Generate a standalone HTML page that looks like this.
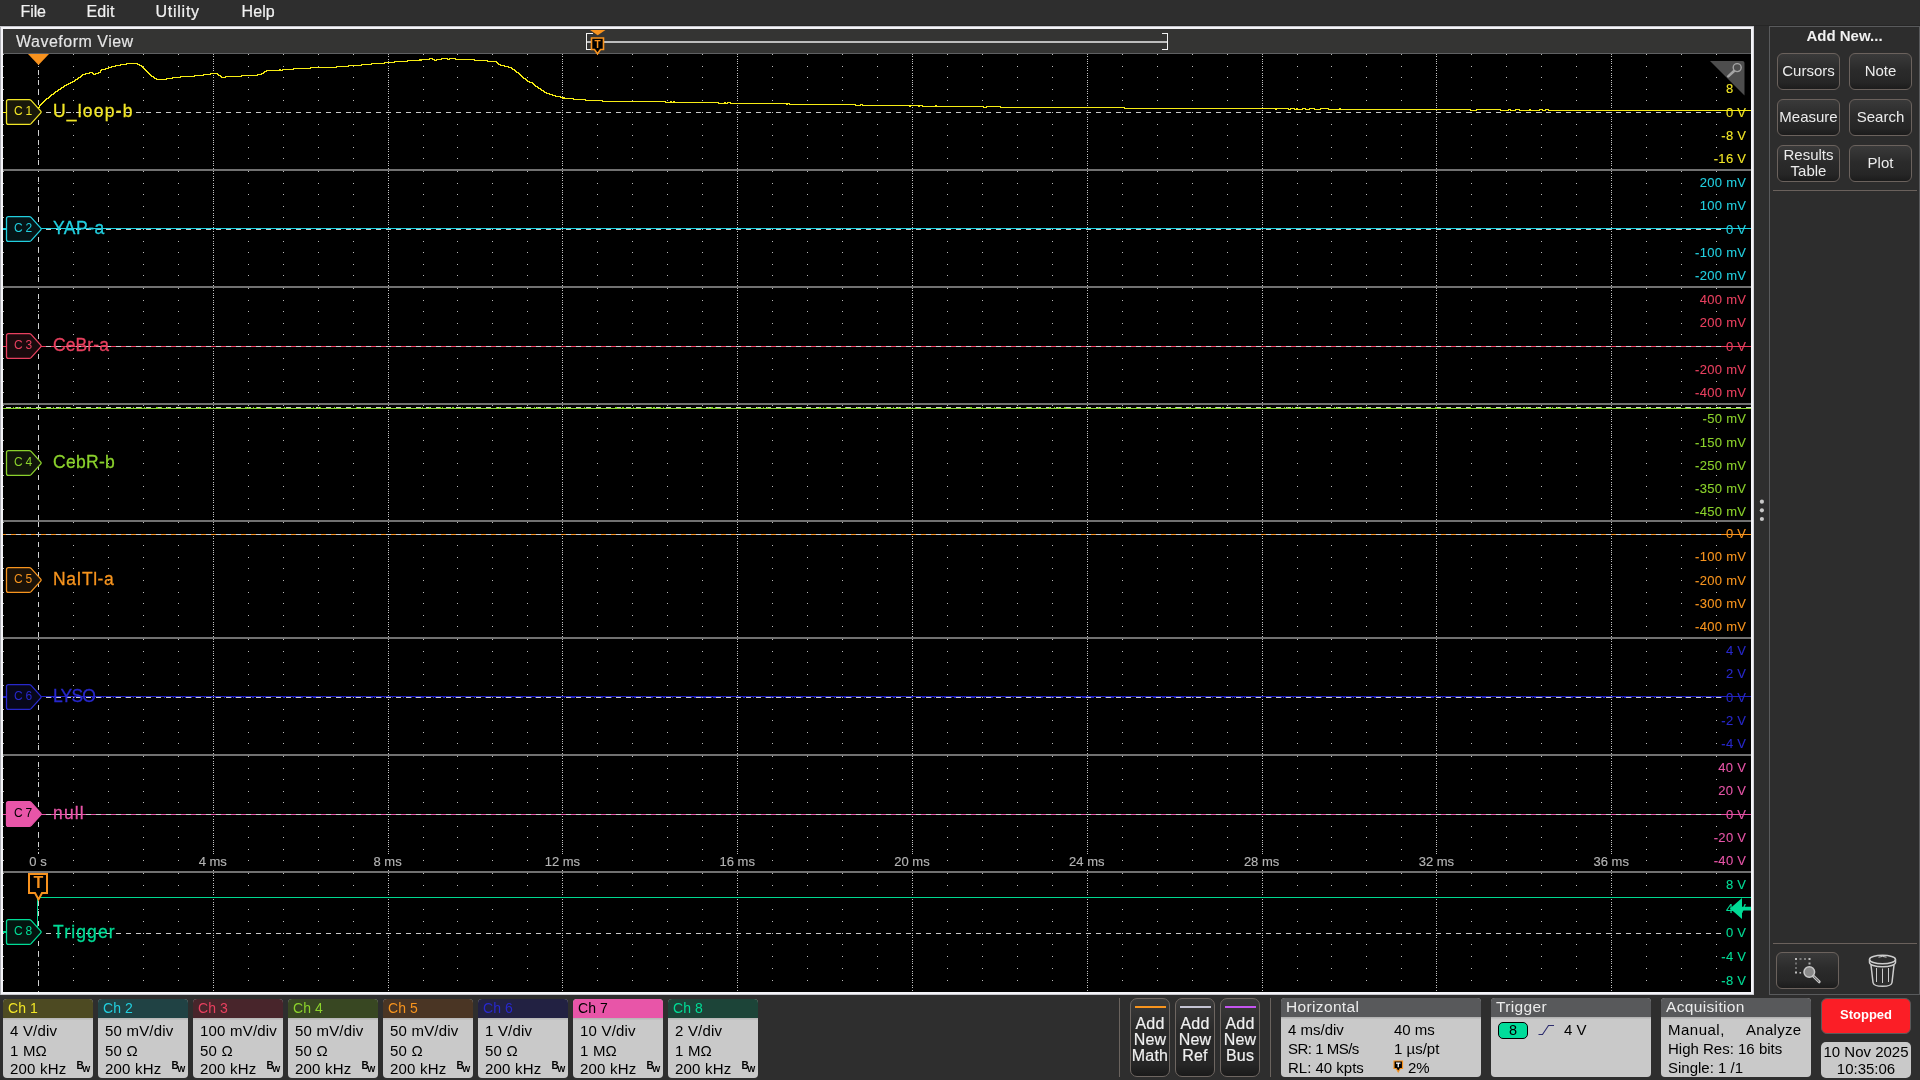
<!DOCTYPE html>
<html lang="en"><head><meta charset="utf-8"><title>Oscilloscope</title>
<style>
html,body{margin:0;padding:0;}
body{width:1920px;height:1080px;overflow:hidden;will-change:transform;background:#2e2e2e;font-family:"Liberation Sans",sans-serif;color:#eee;position:relative;}
.abs{position:absolute;}
.menu span{-webkit-text-stroke:0.2px currentColor;position:absolute;top:2px;font-size:16px;line-height:20px;color:#f2f2f2;white-space:nowrap;}
#frame{position:absolute;left:0;top:26px;width:1754px;height:969px;background:#f4f4f8;}
#frame .l0{position:absolute;left:0;top:1px;width:1px;height:968px;background:#b2b3b8;}
#hdr{position:absolute;left:3px;top:29px;width:1748px;height:24px;background:#343433;border-bottom:1px solid #5f6062;}
#hdr .t{-webkit-text-stroke:0.15px currentColor;position:absolute;left:13px;top:3px;font-size:16px;line-height:20px;color:#e6e6e6;letter-spacing:0.5px;}
#plot{position:absolute;left:3px;top:54px;width:1748px;height:938px;background:#000;}
svg{position:absolute;left:0;top:0;}
.nm{position:absolute;font-size:17.5px;line-height:20px;white-space:nowrap;-webkit-text-stroke:0.28px currentColor;}
.sc{-webkit-text-stroke:0.1px currentColor;position:absolute;left:1656.3px;font-size:13px;line-height:14px;white-space:nowrap;text-align:right;width:90px;letter-spacing:0.3px;}
.sc span{background:#000;padding-left:4px;}
.tl{-webkit-text-stroke:0.15px currentColor;position:absolute;font-size:13px;line-height:14px;white-space:nowrap;text-align:center;width:60px;color:#b4b4b4;top:854px;}
.tl span{background:#000;display:inline-block;padding:1px 1px 1px 1px;}
.bdg{position:absolute;font-size:12px;line-height:14px;width:26px;text-align:center;word-spacing:-0.5px;}
#rp{position:absolute;left:1769px;top:26px;width:149px;height:967px;border:1px solid #595a5c;background:#2d2d2d;}
.btn{position:absolute;width:61px;height:35px;border:1px solid #6b625d;border-radius:6px;background:linear-gradient(#3a3a3a 0%,#2b2b2b 45%,#262626 80%,#1c1c1c 100%);color:#ececec;font-size:15px;text-align:center;}
.btn span{display:block;}
.cb{position:absolute;top:999px;width:90px;height:79px;border-radius:4px;background:#c9c9c9;overflow:hidden;color:#000;}
.cb .h{position:absolute;left:0;top:0;width:100%;height:19px;}
.cb .h span{position:absolute;left:5px;top:1px;font-size:14px;line-height:17px;letter-spacing:0.1px;}
.cb .sh{position:absolute;left:0;top:19px;width:100%;height:2px;background:linear-gradient(#b4b4b4,#c4c4c4);}
.cb .r{position:absolute;left:7px;font-size:15px;line-height:17px;white-space:nowrap;letter-spacing:0.2px;}
.cb .bw{position:absolute;left:73.5px;top:61.5px;font-size:10px;line-height:10px;font-weight:bold;}
.cb .bw sub{font-size:8.5px;vertical-align:-3px;margin-left:-1.5px;font-weight:bold;}
.pn{position:absolute;top:998px;height:79px;border-radius:4px;background:#c9c9c9;overflow:hidden;color:#000;}
.pn .h{position:absolute;left:0;top:0;width:100%;height:19px;background:#58595b;}
.pn .h span{position:absolute;left:5px;top:-0.5px;font-size:15.5px;line-height:17px;color:#ececec;letter-spacing:0.35px;}
.pn .sh{position:absolute;left:0;top:19px;width:100%;height:2px;background:linear-gradient(#aeaeae,#c4c4c4);}
.pn .r{position:absolute;font-size:15px;line-height:17px;white-space:nowrap;}
.an{-webkit-text-stroke:0.2px currentColor;position:absolute;top:998px;width:38px;height:77px;border:1px solid #6e6661;border-radius:7px;background:linear-gradient(#3b3b3b 0%,#2a2a2a 40%,#262626 85%,#1a1a1a 100%);color:#f0f0f0;font-size:16px;line-height:16px;text-align:center;letter-spacing:0.2px;}
.an i{position:absolute;left:4px;top:7px;width:31px;height:2px;}
.an div{position:absolute;left:-4px;width:46px;top:17px;}
</style></head><body>

<div class="menu">
<span style="left:20.5px;letter-spacing:-0.1px">File</span>
<span style="left:86.5px;letter-spacing:0.1px">Edit</span>
<span style="left:155.5px;letter-spacing:0.75px">Utility</span>
<span style="left:241.5px;letter-spacing:0.1px">Help</span>
</div>
<div class="abs" style="left:0;top:25px;width:1920px;height:1px;background:#262626"></div>
<div id="frame"><div class="l0"></div><div class="abs" style="left:0;top:0;width:1754px;height:1px;background:#c4c4ca"></div><div class="abs" style="left:1753px;top:1px;width:1px;height:968px;background:#d6d6dc"></div><div class="abs" style="left:1px;top:968px;width:1753px;height:1px;background:#c8c8ce"></div></div>
<div id="hdr"><div class="t">Waveform View</div></div>
<div id="plot"></div>
<svg width="1920" height="1080" viewBox="0 0 1920 1080">
<defs><clipPath id="cp"><rect x="3" y="54" width="1748" height="938"/></clipPath></defs>
<g clip-path="url(#cp)" shape-rendering="crispEdges">
<path d="M3 54h1M38 54h1M73 54h1M108 54h1M143 54h1M178 54h1M213 54h1M248 54h1M283 54h1M318 54h1M353 54h1M388 54h1M423 54h1M457 54h1M492 54h1M527 54h1M562 54h1M597 54h1M632 54h1M667 54h1M702 54h1M737 54h1M772 54h1M807 54h1M842 54h1M877 54h1M912 54h1M947 54h1M982 54h1M1017 54h1M1052 54h1M1087 54h1M1122 54h1M1157 54h1M1192 54h1M1227 54h1M1262 54h1M1297 54h1M1331 54h1M1366 54h1M1401 54h1M1436 54h1M1471 54h1M1506 54h1M1541 54h1M1576 54h1M1611 54h1M1646 54h1M1681 54h1M1716 54h1M1751 54h1M3 66h1M38 66h1M73 66h1M108 66h1M143 66h1M178 66h1M213 66h1M248 66h1M283 66h1M318 66h1M353 66h1M388 66h1M423 66h1M457 66h1M492 66h1M527 66h1M562 66h1M597 66h1M632 66h1M667 66h1M702 66h1M737 66h1M772 66h1M807 66h1M842 66h1M877 66h1M912 66h1M947 66h1M982 66h1M1017 66h1M1052 66h1M1087 66h1M1122 66h1M1157 66h1M1192 66h1M1227 66h1M1262 66h1M1297 66h1M1331 66h1M1366 66h1M1401 66h1M1436 66h1M1471 66h1M1506 66h1M1541 66h1M1576 66h1M1611 66h1M1646 66h1M1681 66h1M1716 66h1M1751 66h1M3 77h1M38 77h1M73 77h1M108 77h1M143 77h1M178 77h1M213 77h1M248 77h1M283 77h1M318 77h1M353 77h1M388 77h1M423 77h1M457 77h1M492 77h1M527 77h1M562 77h1M597 77h1M632 77h1M667 77h1M702 77h1M737 77h1M772 77h1M807 77h1M842 77h1M877 77h1M912 77h1M947 77h1M982 77h1M1017 77h1M1052 77h1M1087 77h1M1122 77h1M1157 77h1M1192 77h1M1227 77h1M1262 77h1M1297 77h1M1331 77h1M1366 77h1M1401 77h1M1436 77h1M1471 77h1M1506 77h1M1541 77h1M1576 77h1M1611 77h1M1646 77h1M1681 77h1M1716 77h1M1751 77h1M3 89h1M38 89h1M73 89h1M108 89h1M143 89h1M178 89h1M213 89h1M248 89h1M283 89h1M318 89h1M353 89h1M388 89h1M423 89h1M457 89h1M492 89h1M527 89h1M562 89h1M597 89h1M632 89h1M667 89h1M702 89h1M737 89h1M772 89h1M807 89h1M842 89h1M877 89h1M912 89h1M947 89h1M982 89h1M1017 89h1M1052 89h1M1087 89h1M1122 89h1M1157 89h1M1192 89h1M1227 89h1M1262 89h1M1297 89h1M1331 89h1M1366 89h1M1401 89h1M1436 89h1M1471 89h1M1506 89h1M1541 89h1M1576 89h1M1611 89h1M1646 89h1M1681 89h1M1716 89h1M1751 89h1M3 100h1M38 100h1M73 100h1M108 100h1M143 100h1M178 100h1M213 100h1M248 100h1M283 100h1M318 100h1M353 100h1M388 100h1M423 100h1M457 100h1M492 100h1M527 100h1M562 100h1M597 100h1M632 100h1M667 100h1M702 100h1M737 100h1M772 100h1M807 100h1M842 100h1M877 100h1M912 100h1M947 100h1M982 100h1M1017 100h1M1052 100h1M1087 100h1M1122 100h1M1157 100h1M1192 100h1M1227 100h1M1262 100h1M1297 100h1M1331 100h1M1366 100h1M1401 100h1M1436 100h1M1471 100h1M1506 100h1M1541 100h1M1576 100h1M1611 100h1M1646 100h1M1681 100h1M1716 100h1M1751 100h1M3 112h1M38 112h1M73 112h1M108 112h1M143 112h1M178 112h1M213 112h1M248 112h1M283 112h1M318 112h1M353 112h1M388 112h1M423 112h1M457 112h1M492 112h1M527 112h1M562 112h1M597 112h1M632 112h1M667 112h1M702 112h1M737 112h1M772 112h1M807 112h1M842 112h1M877 112h1M912 112h1M947 112h1M982 112h1M1017 112h1M1052 112h1M1087 112h1M1122 112h1M1157 112h1M1192 112h1M1227 112h1M1262 112h1M1297 112h1M1331 112h1M1366 112h1M1401 112h1M1436 112h1M1471 112h1M1506 112h1M1541 112h1M1576 112h1M1611 112h1M1646 112h1M1681 112h1M1716 112h1M1751 112h1M3 124h1M38 124h1M73 124h1M108 124h1M143 124h1M178 124h1M213 124h1M248 124h1M283 124h1M318 124h1M353 124h1M388 124h1M423 124h1M457 124h1M492 124h1M527 124h1M562 124h1M597 124h1M632 124h1M667 124h1M702 124h1M737 124h1M772 124h1M807 124h1M842 124h1M877 124h1M912 124h1M947 124h1M982 124h1M1017 124h1M1052 124h1M1087 124h1M1122 124h1M1157 124h1M1192 124h1M1227 124h1M1262 124h1M1297 124h1M1331 124h1M1366 124h1M1401 124h1M1436 124h1M1471 124h1M1506 124h1M1541 124h1M1576 124h1M1611 124h1M1646 124h1M1681 124h1M1716 124h1M1751 124h1M3 135h1M38 135h1M73 135h1M108 135h1M143 135h1M178 135h1M213 135h1M248 135h1M283 135h1M318 135h1M353 135h1M388 135h1M423 135h1M457 135h1M492 135h1M527 135h1M562 135h1M597 135h1M632 135h1M667 135h1M702 135h1M737 135h1M772 135h1M807 135h1M842 135h1M877 135h1M912 135h1M947 135h1M982 135h1M1017 135h1M1052 135h1M1087 135h1M1122 135h1M1157 135h1M1192 135h1M1227 135h1M1262 135h1M1297 135h1M1331 135h1M1366 135h1M1401 135h1M1436 135h1M1471 135h1M1506 135h1M1541 135h1M1576 135h1M1611 135h1M1646 135h1M1681 135h1M1716 135h1M1751 135h1M3 147h1M38 147h1M73 147h1M108 147h1M143 147h1M178 147h1M213 147h1M248 147h1M283 147h1M318 147h1M353 147h1M388 147h1M423 147h1M457 147h1M492 147h1M527 147h1M562 147h1M597 147h1M632 147h1M667 147h1M702 147h1M737 147h1M772 147h1M807 147h1M842 147h1M877 147h1M912 147h1M947 147h1M982 147h1M1017 147h1M1052 147h1M1087 147h1M1122 147h1M1157 147h1M1192 147h1M1227 147h1M1262 147h1M1297 147h1M1331 147h1M1366 147h1M1401 147h1M1436 147h1M1471 147h1M1506 147h1M1541 147h1M1576 147h1M1611 147h1M1646 147h1M1681 147h1M1716 147h1M1751 147h1M3 158h1M38 158h1M73 158h1M108 158h1M143 158h1M178 158h1M213 158h1M248 158h1M283 158h1M318 158h1M353 158h1M388 158h1M423 158h1M457 158h1M492 158h1M527 158h1M562 158h1M597 158h1M632 158h1M667 158h1M702 158h1M737 158h1M772 158h1M807 158h1M842 158h1M877 158h1M912 158h1M947 158h1M982 158h1M1017 158h1M1052 158h1M1087 158h1M1122 158h1M1157 158h1M1192 158h1M1227 158h1M1262 158h1M1297 158h1M1331 158h1M1366 158h1M1401 158h1M1436 158h1M1471 158h1M1506 158h1M1541 158h1M1576 158h1M1611 158h1M1646 158h1M1681 158h1M1716 158h1M1751 158h1M3 171h1M38 171h1M73 171h1M108 171h1M143 171h1M178 171h1M213 171h1M248 171h1M283 171h1M318 171h1M353 171h1M388 171h1M423 171h1M457 171h1M492 171h1M527 171h1M562 171h1M597 171h1M632 171h1M667 171h1M702 171h1M737 171h1M772 171h1M807 171h1M842 171h1M877 171h1M912 171h1M947 171h1M982 171h1M1017 171h1M1052 171h1M1087 171h1M1122 171h1M1157 171h1M1192 171h1M1227 171h1M1262 171h1M1297 171h1M1331 171h1M1366 171h1M1401 171h1M1436 171h1M1471 171h1M1506 171h1M1541 171h1M1576 171h1M1611 171h1M1646 171h1M1681 171h1M1716 171h1M1751 171h1M3 183h1M38 183h1M73 183h1M108 183h1M143 183h1M178 183h1M213 183h1M248 183h1M283 183h1M318 183h1M353 183h1M388 183h1M423 183h1M457 183h1M492 183h1M527 183h1M562 183h1M597 183h1M632 183h1M667 183h1M702 183h1M737 183h1M772 183h1M807 183h1M842 183h1M877 183h1M912 183h1M947 183h1M982 183h1M1017 183h1M1052 183h1M1087 183h1M1122 183h1M1157 183h1M1192 183h1M1227 183h1M1262 183h1M1297 183h1M1331 183h1M1366 183h1M1401 183h1M1436 183h1M1471 183h1M1506 183h1M1541 183h1M1576 183h1M1611 183h1M1646 183h1M1681 183h1M1716 183h1M1751 183h1M3 194h1M38 194h1M73 194h1M108 194h1M143 194h1M178 194h1M213 194h1M248 194h1M283 194h1M318 194h1M353 194h1M388 194h1M423 194h1M457 194h1M492 194h1M527 194h1M562 194h1M597 194h1M632 194h1M667 194h1M702 194h1M737 194h1M772 194h1M807 194h1M842 194h1M877 194h1M912 194h1M947 194h1M982 194h1M1017 194h1M1052 194h1M1087 194h1M1122 194h1M1157 194h1M1192 194h1M1227 194h1M1262 194h1M1297 194h1M1331 194h1M1366 194h1M1401 194h1M1436 194h1M1471 194h1M1506 194h1M1541 194h1M1576 194h1M1611 194h1M1646 194h1M1681 194h1M1716 194h1M1751 194h1M3 206h1M38 206h1M73 206h1M108 206h1M143 206h1M178 206h1M213 206h1M248 206h1M283 206h1M318 206h1M353 206h1M388 206h1M423 206h1M457 206h1M492 206h1M527 206h1M562 206h1M597 206h1M632 206h1M667 206h1M702 206h1M737 206h1M772 206h1M807 206h1M842 206h1M877 206h1M912 206h1M947 206h1M982 206h1M1017 206h1M1052 206h1M1087 206h1M1122 206h1M1157 206h1M1192 206h1M1227 206h1M1262 206h1M1297 206h1M1331 206h1M1366 206h1M1401 206h1M1436 206h1M1471 206h1M1506 206h1M1541 206h1M1576 206h1M1611 206h1M1646 206h1M1681 206h1M1716 206h1M1751 206h1M3 217h1M38 217h1M73 217h1M108 217h1M143 217h1M178 217h1M213 217h1M248 217h1M283 217h1M318 217h1M353 217h1M388 217h1M423 217h1M457 217h1M492 217h1M527 217h1M562 217h1M597 217h1M632 217h1M667 217h1M702 217h1M737 217h1M772 217h1M807 217h1M842 217h1M877 217h1M912 217h1M947 217h1M982 217h1M1017 217h1M1052 217h1M1087 217h1M1122 217h1M1157 217h1M1192 217h1M1227 217h1M1262 217h1M1297 217h1M1331 217h1M1366 217h1M1401 217h1M1436 217h1M1471 217h1M1506 217h1M1541 217h1M1576 217h1M1611 217h1M1646 217h1M1681 217h1M1716 217h1M1751 217h1M3 229h1M38 229h1M73 229h1M108 229h1M143 229h1M178 229h1M213 229h1M248 229h1M283 229h1M318 229h1M353 229h1M388 229h1M423 229h1M457 229h1M492 229h1M527 229h1M562 229h1M597 229h1M632 229h1M667 229h1M702 229h1M737 229h1M772 229h1M807 229h1M842 229h1M877 229h1M912 229h1M947 229h1M982 229h1M1017 229h1M1052 229h1M1087 229h1M1122 229h1M1157 229h1M1192 229h1M1227 229h1M1262 229h1M1297 229h1M1331 229h1M1366 229h1M1401 229h1M1436 229h1M1471 229h1M1506 229h1M1541 229h1M1576 229h1M1611 229h1M1646 229h1M1681 229h1M1716 229h1M1751 229h1M3 241h1M38 241h1M73 241h1M108 241h1M143 241h1M178 241h1M213 241h1M248 241h1M283 241h1M318 241h1M353 241h1M388 241h1M423 241h1M457 241h1M492 241h1M527 241h1M562 241h1M597 241h1M632 241h1M667 241h1M702 241h1M737 241h1M772 241h1M807 241h1M842 241h1M877 241h1M912 241h1M947 241h1M982 241h1M1017 241h1M1052 241h1M1087 241h1M1122 241h1M1157 241h1M1192 241h1M1227 241h1M1262 241h1M1297 241h1M1331 241h1M1366 241h1M1401 241h1M1436 241h1M1471 241h1M1506 241h1M1541 241h1M1576 241h1M1611 241h1M1646 241h1M1681 241h1M1716 241h1M1751 241h1M3 252h1M38 252h1M73 252h1M108 252h1M143 252h1M178 252h1M213 252h1M248 252h1M283 252h1M318 252h1M353 252h1M388 252h1M423 252h1M457 252h1M492 252h1M527 252h1M562 252h1M597 252h1M632 252h1M667 252h1M702 252h1M737 252h1M772 252h1M807 252h1M842 252h1M877 252h1M912 252h1M947 252h1M982 252h1M1017 252h1M1052 252h1M1087 252h1M1122 252h1M1157 252h1M1192 252h1M1227 252h1M1262 252h1M1297 252h1M1331 252h1M1366 252h1M1401 252h1M1436 252h1M1471 252h1M1506 252h1M1541 252h1M1576 252h1M1611 252h1M1646 252h1M1681 252h1M1716 252h1M1751 252h1M3 264h1M38 264h1M73 264h1M108 264h1M143 264h1M178 264h1M213 264h1M248 264h1M283 264h1M318 264h1M353 264h1M388 264h1M423 264h1M457 264h1M492 264h1M527 264h1M562 264h1M597 264h1M632 264h1M667 264h1M702 264h1M737 264h1M772 264h1M807 264h1M842 264h1M877 264h1M912 264h1M947 264h1M982 264h1M1017 264h1M1052 264h1M1087 264h1M1122 264h1M1157 264h1M1192 264h1M1227 264h1M1262 264h1M1297 264h1M1331 264h1M1366 264h1M1401 264h1M1436 264h1M1471 264h1M1506 264h1M1541 264h1M1576 264h1M1611 264h1M1646 264h1M1681 264h1M1716 264h1M1751 264h1M3 275h1M38 275h1M73 275h1M108 275h1M143 275h1M178 275h1M213 275h1M248 275h1M283 275h1M318 275h1M353 275h1M388 275h1M423 275h1M457 275h1M492 275h1M527 275h1M562 275h1M597 275h1M632 275h1M667 275h1M702 275h1M737 275h1M772 275h1M807 275h1M842 275h1M877 275h1M912 275h1M947 275h1M982 275h1M1017 275h1M1052 275h1M1087 275h1M1122 275h1M1157 275h1M1192 275h1M1227 275h1M1262 275h1M1297 275h1M1331 275h1M1366 275h1M1401 275h1M1436 275h1M1471 275h1M1506 275h1M1541 275h1M1576 275h1M1611 275h1M1646 275h1M1681 275h1M1716 275h1M1751 275h1M3 288h1M38 288h1M73 288h1M108 288h1M143 288h1M178 288h1M213 288h1M248 288h1M283 288h1M318 288h1M353 288h1M388 288h1M423 288h1M457 288h1M492 288h1M527 288h1M562 288h1M597 288h1M632 288h1M667 288h1M702 288h1M737 288h1M772 288h1M807 288h1M842 288h1M877 288h1M912 288h1M947 288h1M982 288h1M1017 288h1M1052 288h1M1087 288h1M1122 288h1M1157 288h1M1192 288h1M1227 288h1M1262 288h1M1297 288h1M1331 288h1M1366 288h1M1401 288h1M1436 288h1M1471 288h1M1506 288h1M1541 288h1M1576 288h1M1611 288h1M1646 288h1M1681 288h1M1716 288h1M1751 288h1M3 300h1M38 300h1M73 300h1M108 300h1M143 300h1M178 300h1M213 300h1M248 300h1M283 300h1M318 300h1M353 300h1M388 300h1M423 300h1M457 300h1M492 300h1M527 300h1M562 300h1M597 300h1M632 300h1M667 300h1M702 300h1M737 300h1M772 300h1M807 300h1M842 300h1M877 300h1M912 300h1M947 300h1M982 300h1M1017 300h1M1052 300h1M1087 300h1M1122 300h1M1157 300h1M1192 300h1M1227 300h1M1262 300h1M1297 300h1M1331 300h1M1366 300h1M1401 300h1M1436 300h1M1471 300h1M1506 300h1M1541 300h1M1576 300h1M1611 300h1M1646 300h1M1681 300h1M1716 300h1M1751 300h1M3 311h1M38 311h1M73 311h1M108 311h1M143 311h1M178 311h1M213 311h1M248 311h1M283 311h1M318 311h1M353 311h1M388 311h1M423 311h1M457 311h1M492 311h1M527 311h1M562 311h1M597 311h1M632 311h1M667 311h1M702 311h1M737 311h1M772 311h1M807 311h1M842 311h1M877 311h1M912 311h1M947 311h1M982 311h1M1017 311h1M1052 311h1M1087 311h1M1122 311h1M1157 311h1M1192 311h1M1227 311h1M1262 311h1M1297 311h1M1331 311h1M1366 311h1M1401 311h1M1436 311h1M1471 311h1M1506 311h1M1541 311h1M1576 311h1M1611 311h1M1646 311h1M1681 311h1M1716 311h1M1751 311h1M3 323h1M38 323h1M73 323h1M108 323h1M143 323h1M178 323h1M213 323h1M248 323h1M283 323h1M318 323h1M353 323h1M388 323h1M423 323h1M457 323h1M492 323h1M527 323h1M562 323h1M597 323h1M632 323h1M667 323h1M702 323h1M737 323h1M772 323h1M807 323h1M842 323h1M877 323h1M912 323h1M947 323h1M982 323h1M1017 323h1M1052 323h1M1087 323h1M1122 323h1M1157 323h1M1192 323h1M1227 323h1M1262 323h1M1297 323h1M1331 323h1M1366 323h1M1401 323h1M1436 323h1M1471 323h1M1506 323h1M1541 323h1M1576 323h1M1611 323h1M1646 323h1M1681 323h1M1716 323h1M1751 323h1M3 334h1M38 334h1M73 334h1M108 334h1M143 334h1M178 334h1M213 334h1M248 334h1M283 334h1M318 334h1M353 334h1M388 334h1M423 334h1M457 334h1M492 334h1M527 334h1M562 334h1M597 334h1M632 334h1M667 334h1M702 334h1M737 334h1M772 334h1M807 334h1M842 334h1M877 334h1M912 334h1M947 334h1M982 334h1M1017 334h1M1052 334h1M1087 334h1M1122 334h1M1157 334h1M1192 334h1M1227 334h1M1262 334h1M1297 334h1M1331 334h1M1366 334h1M1401 334h1M1436 334h1M1471 334h1M1506 334h1M1541 334h1M1576 334h1M1611 334h1M1646 334h1M1681 334h1M1716 334h1M1751 334h1M3 346h1M38 346h1M73 346h1M108 346h1M143 346h1M178 346h1M213 346h1M248 346h1M283 346h1M318 346h1M353 346h1M388 346h1M423 346h1M457 346h1M492 346h1M527 346h1M562 346h1M597 346h1M632 346h1M667 346h1M702 346h1M737 346h1M772 346h1M807 346h1M842 346h1M877 346h1M912 346h1M947 346h1M982 346h1M1017 346h1M1052 346h1M1087 346h1M1122 346h1M1157 346h1M1192 346h1M1227 346h1M1262 346h1M1297 346h1M1331 346h1M1366 346h1M1401 346h1M1436 346h1M1471 346h1M1506 346h1M1541 346h1M1576 346h1M1611 346h1M1646 346h1M1681 346h1M1716 346h1M1751 346h1M3 358h1M38 358h1M73 358h1M108 358h1M143 358h1M178 358h1M213 358h1M248 358h1M283 358h1M318 358h1M353 358h1M388 358h1M423 358h1M457 358h1M492 358h1M527 358h1M562 358h1M597 358h1M632 358h1M667 358h1M702 358h1M737 358h1M772 358h1M807 358h1M842 358h1M877 358h1M912 358h1M947 358h1M982 358h1M1017 358h1M1052 358h1M1087 358h1M1122 358h1M1157 358h1M1192 358h1M1227 358h1M1262 358h1M1297 358h1M1331 358h1M1366 358h1M1401 358h1M1436 358h1M1471 358h1M1506 358h1M1541 358h1M1576 358h1M1611 358h1M1646 358h1M1681 358h1M1716 358h1M1751 358h1M3 369h1M38 369h1M73 369h1M108 369h1M143 369h1M178 369h1M213 369h1M248 369h1M283 369h1M318 369h1M353 369h1M388 369h1M423 369h1M457 369h1M492 369h1M527 369h1M562 369h1M597 369h1M632 369h1M667 369h1M702 369h1M737 369h1M772 369h1M807 369h1M842 369h1M877 369h1M912 369h1M947 369h1M982 369h1M1017 369h1M1052 369h1M1087 369h1M1122 369h1M1157 369h1M1192 369h1M1227 369h1M1262 369h1M1297 369h1M1331 369h1M1366 369h1M1401 369h1M1436 369h1M1471 369h1M1506 369h1M1541 369h1M1576 369h1M1611 369h1M1646 369h1M1681 369h1M1716 369h1M1751 369h1M3 381h1M38 381h1M73 381h1M108 381h1M143 381h1M178 381h1M213 381h1M248 381h1M283 381h1M318 381h1M353 381h1M388 381h1M423 381h1M457 381h1M492 381h1M527 381h1M562 381h1M597 381h1M632 381h1M667 381h1M702 381h1M737 381h1M772 381h1M807 381h1M842 381h1M877 381h1M912 381h1M947 381h1M982 381h1M1017 381h1M1052 381h1M1087 381h1M1122 381h1M1157 381h1M1192 381h1M1227 381h1M1262 381h1M1297 381h1M1331 381h1M1366 381h1M1401 381h1M1436 381h1M1471 381h1M1506 381h1M1541 381h1M1576 381h1M1611 381h1M1646 381h1M1681 381h1M1716 381h1M1751 381h1M3 392h1M38 392h1M73 392h1M108 392h1M143 392h1M178 392h1M213 392h1M248 392h1M283 392h1M318 392h1M353 392h1M388 392h1M423 392h1M457 392h1M492 392h1M527 392h1M562 392h1M597 392h1M632 392h1M667 392h1M702 392h1M737 392h1M772 392h1M807 392h1M842 392h1M877 392h1M912 392h1M947 392h1M982 392h1M1017 392h1M1052 392h1M1087 392h1M1122 392h1M1157 392h1M1192 392h1M1227 392h1M1262 392h1M1297 392h1M1331 392h1M1366 392h1M1401 392h1M1436 392h1M1471 392h1M1506 392h1M1541 392h1M1576 392h1M1611 392h1M1646 392h1M1681 392h1M1716 392h1M1751 392h1M3 405h1M38 405h1M73 405h1M108 405h1M143 405h1M178 405h1M213 405h1M248 405h1M283 405h1M318 405h1M353 405h1M388 405h1M423 405h1M457 405h1M492 405h1M527 405h1M562 405h1M597 405h1M632 405h1M667 405h1M702 405h1M737 405h1M772 405h1M807 405h1M842 405h1M877 405h1M912 405h1M947 405h1M982 405h1M1017 405h1M1052 405h1M1087 405h1M1122 405h1M1157 405h1M1192 405h1M1227 405h1M1262 405h1M1297 405h1M1331 405h1M1366 405h1M1401 405h1M1436 405h1M1471 405h1M1506 405h1M1541 405h1M1576 405h1M1611 405h1M1646 405h1M1681 405h1M1716 405h1M1751 405h1M3 417h1M38 417h1M73 417h1M108 417h1M143 417h1M178 417h1M213 417h1M248 417h1M283 417h1M318 417h1M353 417h1M388 417h1M423 417h1M457 417h1M492 417h1M527 417h1M562 417h1M597 417h1M632 417h1M667 417h1M702 417h1M737 417h1M772 417h1M807 417h1M842 417h1M877 417h1M912 417h1M947 417h1M982 417h1M1017 417h1M1052 417h1M1087 417h1M1122 417h1M1157 417h1M1192 417h1M1227 417h1M1262 417h1M1297 417h1M1331 417h1M1366 417h1M1401 417h1M1436 417h1M1471 417h1M1506 417h1M1541 417h1M1576 417h1M1611 417h1M1646 417h1M1681 417h1M1716 417h1M1751 417h1M3 428h1M38 428h1M73 428h1M108 428h1M143 428h1M178 428h1M213 428h1M248 428h1M283 428h1M318 428h1M353 428h1M388 428h1M423 428h1M457 428h1M492 428h1M527 428h1M562 428h1M597 428h1M632 428h1M667 428h1M702 428h1M737 428h1M772 428h1M807 428h1M842 428h1M877 428h1M912 428h1M947 428h1M982 428h1M1017 428h1M1052 428h1M1087 428h1M1122 428h1M1157 428h1M1192 428h1M1227 428h1M1262 428h1M1297 428h1M1331 428h1M1366 428h1M1401 428h1M1436 428h1M1471 428h1M1506 428h1M1541 428h1M1576 428h1M1611 428h1M1646 428h1M1681 428h1M1716 428h1M1751 428h1M3 440h1M38 440h1M73 440h1M108 440h1M143 440h1M178 440h1M213 440h1M248 440h1M283 440h1M318 440h1M353 440h1M388 440h1M423 440h1M457 440h1M492 440h1M527 440h1M562 440h1M597 440h1M632 440h1M667 440h1M702 440h1M737 440h1M772 440h1M807 440h1M842 440h1M877 440h1M912 440h1M947 440h1M982 440h1M1017 440h1M1052 440h1M1087 440h1M1122 440h1M1157 440h1M1192 440h1M1227 440h1M1262 440h1M1297 440h1M1331 440h1M1366 440h1M1401 440h1M1436 440h1M1471 440h1M1506 440h1M1541 440h1M1576 440h1M1611 440h1M1646 440h1M1681 440h1M1716 440h1M1751 440h1M3 451h1M38 451h1M73 451h1M108 451h1M143 451h1M178 451h1M213 451h1M248 451h1M283 451h1M318 451h1M353 451h1M388 451h1M423 451h1M457 451h1M492 451h1M527 451h1M562 451h1M597 451h1M632 451h1M667 451h1M702 451h1M737 451h1M772 451h1M807 451h1M842 451h1M877 451h1M912 451h1M947 451h1M982 451h1M1017 451h1M1052 451h1M1087 451h1M1122 451h1M1157 451h1M1192 451h1M1227 451h1M1262 451h1M1297 451h1M1331 451h1M1366 451h1M1401 451h1M1436 451h1M1471 451h1M1506 451h1M1541 451h1M1576 451h1M1611 451h1M1646 451h1M1681 451h1M1716 451h1M1751 451h1M3 463h1M38 463h1M73 463h1M108 463h1M143 463h1M178 463h1M213 463h1M248 463h1M283 463h1M318 463h1M353 463h1M388 463h1M423 463h1M457 463h1M492 463h1M527 463h1M562 463h1M597 463h1M632 463h1M667 463h1M702 463h1M737 463h1M772 463h1M807 463h1M842 463h1M877 463h1M912 463h1M947 463h1M982 463h1M1017 463h1M1052 463h1M1087 463h1M1122 463h1M1157 463h1M1192 463h1M1227 463h1M1262 463h1M1297 463h1M1331 463h1M1366 463h1M1401 463h1M1436 463h1M1471 463h1M1506 463h1M1541 463h1M1576 463h1M1611 463h1M1646 463h1M1681 463h1M1716 463h1M1751 463h1M3 475h1M38 475h1M73 475h1M108 475h1M143 475h1M178 475h1M213 475h1M248 475h1M283 475h1M318 475h1M353 475h1M388 475h1M423 475h1M457 475h1M492 475h1M527 475h1M562 475h1M597 475h1M632 475h1M667 475h1M702 475h1M737 475h1M772 475h1M807 475h1M842 475h1M877 475h1M912 475h1M947 475h1M982 475h1M1017 475h1M1052 475h1M1087 475h1M1122 475h1M1157 475h1M1192 475h1M1227 475h1M1262 475h1M1297 475h1M1331 475h1M1366 475h1M1401 475h1M1436 475h1M1471 475h1M1506 475h1M1541 475h1M1576 475h1M1611 475h1M1646 475h1M1681 475h1M1716 475h1M1751 475h1M3 486h1M38 486h1M73 486h1M108 486h1M143 486h1M178 486h1M213 486h1M248 486h1M283 486h1M318 486h1M353 486h1M388 486h1M423 486h1M457 486h1M492 486h1M527 486h1M562 486h1M597 486h1M632 486h1M667 486h1M702 486h1M737 486h1M772 486h1M807 486h1M842 486h1M877 486h1M912 486h1M947 486h1M982 486h1M1017 486h1M1052 486h1M1087 486h1M1122 486h1M1157 486h1M1192 486h1M1227 486h1M1262 486h1M1297 486h1M1331 486h1M1366 486h1M1401 486h1M1436 486h1M1471 486h1M1506 486h1M1541 486h1M1576 486h1M1611 486h1M1646 486h1M1681 486h1M1716 486h1M1751 486h1M3 498h1M38 498h1M73 498h1M108 498h1M143 498h1M178 498h1M213 498h1M248 498h1M283 498h1M318 498h1M353 498h1M388 498h1M423 498h1M457 498h1M492 498h1M527 498h1M562 498h1M597 498h1M632 498h1M667 498h1M702 498h1M737 498h1M772 498h1M807 498h1M842 498h1M877 498h1M912 498h1M947 498h1M982 498h1M1017 498h1M1052 498h1M1087 498h1M1122 498h1M1157 498h1M1192 498h1M1227 498h1M1262 498h1M1297 498h1M1331 498h1M1366 498h1M1401 498h1M1436 498h1M1471 498h1M1506 498h1M1541 498h1M1576 498h1M1611 498h1M1646 498h1M1681 498h1M1716 498h1M1751 498h1M3 509h1M38 509h1M73 509h1M108 509h1M143 509h1M178 509h1M213 509h1M248 509h1M283 509h1M318 509h1M353 509h1M388 509h1M423 509h1M457 509h1M492 509h1M527 509h1M562 509h1M597 509h1M632 509h1M667 509h1M702 509h1M737 509h1M772 509h1M807 509h1M842 509h1M877 509h1M912 509h1M947 509h1M982 509h1M1017 509h1M1052 509h1M1087 509h1M1122 509h1M1157 509h1M1192 509h1M1227 509h1M1262 509h1M1297 509h1M1331 509h1M1366 509h1M1401 509h1M1436 509h1M1471 509h1M1506 509h1M1541 509h1M1576 509h1M1611 509h1M1646 509h1M1681 509h1M1716 509h1M1751 509h1M3 522h1M38 522h1M73 522h1M108 522h1M143 522h1M178 522h1M213 522h1M248 522h1M283 522h1M318 522h1M353 522h1M388 522h1M423 522h1M457 522h1M492 522h1M527 522h1M562 522h1M597 522h1M632 522h1M667 522h1M702 522h1M737 522h1M772 522h1M807 522h1M842 522h1M877 522h1M912 522h1M947 522h1M982 522h1M1017 522h1M1052 522h1M1087 522h1M1122 522h1M1157 522h1M1192 522h1M1227 522h1M1262 522h1M1297 522h1M1331 522h1M1366 522h1M1401 522h1M1436 522h1M1471 522h1M1506 522h1M1541 522h1M1576 522h1M1611 522h1M1646 522h1M1681 522h1M1716 522h1M1751 522h1M3 534h1M38 534h1M73 534h1M108 534h1M143 534h1M178 534h1M213 534h1M248 534h1M283 534h1M318 534h1M353 534h1M388 534h1M423 534h1M457 534h1M492 534h1M527 534h1M562 534h1M597 534h1M632 534h1M667 534h1M702 534h1M737 534h1M772 534h1M807 534h1M842 534h1M877 534h1M912 534h1M947 534h1M982 534h1M1017 534h1M1052 534h1M1087 534h1M1122 534h1M1157 534h1M1192 534h1M1227 534h1M1262 534h1M1297 534h1M1331 534h1M1366 534h1M1401 534h1M1436 534h1M1471 534h1M1506 534h1M1541 534h1M1576 534h1M1611 534h1M1646 534h1M1681 534h1M1716 534h1M1751 534h1M3 545h1M38 545h1M73 545h1M108 545h1M143 545h1M178 545h1M213 545h1M248 545h1M283 545h1M318 545h1M353 545h1M388 545h1M423 545h1M457 545h1M492 545h1M527 545h1M562 545h1M597 545h1M632 545h1M667 545h1M702 545h1M737 545h1M772 545h1M807 545h1M842 545h1M877 545h1M912 545h1M947 545h1M982 545h1M1017 545h1M1052 545h1M1087 545h1M1122 545h1M1157 545h1M1192 545h1M1227 545h1M1262 545h1M1297 545h1M1331 545h1M1366 545h1M1401 545h1M1436 545h1M1471 545h1M1506 545h1M1541 545h1M1576 545h1M1611 545h1M1646 545h1M1681 545h1M1716 545h1M1751 545h1M3 557h1M38 557h1M73 557h1M108 557h1M143 557h1M178 557h1M213 557h1M248 557h1M283 557h1M318 557h1M353 557h1M388 557h1M423 557h1M457 557h1M492 557h1M527 557h1M562 557h1M597 557h1M632 557h1M667 557h1M702 557h1M737 557h1M772 557h1M807 557h1M842 557h1M877 557h1M912 557h1M947 557h1M982 557h1M1017 557h1M1052 557h1M1087 557h1M1122 557h1M1157 557h1M1192 557h1M1227 557h1M1262 557h1M1297 557h1M1331 557h1M1366 557h1M1401 557h1M1436 557h1M1471 557h1M1506 557h1M1541 557h1M1576 557h1M1611 557h1M1646 557h1M1681 557h1M1716 557h1M1751 557h1M3 568h1M38 568h1M73 568h1M108 568h1M143 568h1M178 568h1M213 568h1M248 568h1M283 568h1M318 568h1M353 568h1M388 568h1M423 568h1M457 568h1M492 568h1M527 568h1M562 568h1M597 568h1M632 568h1M667 568h1M702 568h1M737 568h1M772 568h1M807 568h1M842 568h1M877 568h1M912 568h1M947 568h1M982 568h1M1017 568h1M1052 568h1M1087 568h1M1122 568h1M1157 568h1M1192 568h1M1227 568h1M1262 568h1M1297 568h1M1331 568h1M1366 568h1M1401 568h1M1436 568h1M1471 568h1M1506 568h1M1541 568h1M1576 568h1M1611 568h1M1646 568h1M1681 568h1M1716 568h1M1751 568h1M3 580h1M38 580h1M73 580h1M108 580h1M143 580h1M178 580h1M213 580h1M248 580h1M283 580h1M318 580h1M353 580h1M388 580h1M423 580h1M457 580h1M492 580h1M527 580h1M562 580h1M597 580h1M632 580h1M667 580h1M702 580h1M737 580h1M772 580h1M807 580h1M842 580h1M877 580h1M912 580h1M947 580h1M982 580h1M1017 580h1M1052 580h1M1087 580h1M1122 580h1M1157 580h1M1192 580h1M1227 580h1M1262 580h1M1297 580h1M1331 580h1M1366 580h1M1401 580h1M1436 580h1M1471 580h1M1506 580h1M1541 580h1M1576 580h1M1611 580h1M1646 580h1M1681 580h1M1716 580h1M1751 580h1M3 592h1M38 592h1M73 592h1M108 592h1M143 592h1M178 592h1M213 592h1M248 592h1M283 592h1M318 592h1M353 592h1M388 592h1M423 592h1M457 592h1M492 592h1M527 592h1M562 592h1M597 592h1M632 592h1M667 592h1M702 592h1M737 592h1M772 592h1M807 592h1M842 592h1M877 592h1M912 592h1M947 592h1M982 592h1M1017 592h1M1052 592h1M1087 592h1M1122 592h1M1157 592h1M1192 592h1M1227 592h1M1262 592h1M1297 592h1M1331 592h1M1366 592h1M1401 592h1M1436 592h1M1471 592h1M1506 592h1M1541 592h1M1576 592h1M1611 592h1M1646 592h1M1681 592h1M1716 592h1M1751 592h1M3 603h1M38 603h1M73 603h1M108 603h1M143 603h1M178 603h1M213 603h1M248 603h1M283 603h1M318 603h1M353 603h1M388 603h1M423 603h1M457 603h1M492 603h1M527 603h1M562 603h1M597 603h1M632 603h1M667 603h1M702 603h1M737 603h1M772 603h1M807 603h1M842 603h1M877 603h1M912 603h1M947 603h1M982 603h1M1017 603h1M1052 603h1M1087 603h1M1122 603h1M1157 603h1M1192 603h1M1227 603h1M1262 603h1M1297 603h1M1331 603h1M1366 603h1M1401 603h1M1436 603h1M1471 603h1M1506 603h1M1541 603h1M1576 603h1M1611 603h1M1646 603h1M1681 603h1M1716 603h1M1751 603h1M3 615h1M38 615h1M73 615h1M108 615h1M143 615h1M178 615h1M213 615h1M248 615h1M283 615h1M318 615h1M353 615h1M388 615h1M423 615h1M457 615h1M492 615h1M527 615h1M562 615h1M597 615h1M632 615h1M667 615h1M702 615h1M737 615h1M772 615h1M807 615h1M842 615h1M877 615h1M912 615h1M947 615h1M982 615h1M1017 615h1M1052 615h1M1087 615h1M1122 615h1M1157 615h1M1192 615h1M1227 615h1M1262 615h1M1297 615h1M1331 615h1M1366 615h1M1401 615h1M1436 615h1M1471 615h1M1506 615h1M1541 615h1M1576 615h1M1611 615h1M1646 615h1M1681 615h1M1716 615h1M1751 615h1M3 626h1M38 626h1M73 626h1M108 626h1M143 626h1M178 626h1M213 626h1M248 626h1M283 626h1M318 626h1M353 626h1M388 626h1M423 626h1M457 626h1M492 626h1M527 626h1M562 626h1M597 626h1M632 626h1M667 626h1M702 626h1M737 626h1M772 626h1M807 626h1M842 626h1M877 626h1M912 626h1M947 626h1M982 626h1M1017 626h1M1052 626h1M1087 626h1M1122 626h1M1157 626h1M1192 626h1M1227 626h1M1262 626h1M1297 626h1M1331 626h1M1366 626h1M1401 626h1M1436 626h1M1471 626h1M1506 626h1M1541 626h1M1576 626h1M1611 626h1M1646 626h1M1681 626h1M1716 626h1M1751 626h1M3 639h1M38 639h1M73 639h1M108 639h1M143 639h1M178 639h1M213 639h1M248 639h1M283 639h1M318 639h1M353 639h1M388 639h1M423 639h1M457 639h1M492 639h1M527 639h1M562 639h1M597 639h1M632 639h1M667 639h1M702 639h1M737 639h1M772 639h1M807 639h1M842 639h1M877 639h1M912 639h1M947 639h1M982 639h1M1017 639h1M1052 639h1M1087 639h1M1122 639h1M1157 639h1M1192 639h1M1227 639h1M1262 639h1M1297 639h1M1331 639h1M1366 639h1M1401 639h1M1436 639h1M1471 639h1M1506 639h1M1541 639h1M1576 639h1M1611 639h1M1646 639h1M1681 639h1M1716 639h1M1751 639h1M3 651h1M38 651h1M73 651h1M108 651h1M143 651h1M178 651h1M213 651h1M248 651h1M283 651h1M318 651h1M353 651h1M388 651h1M423 651h1M457 651h1M492 651h1M527 651h1M562 651h1M597 651h1M632 651h1M667 651h1M702 651h1M737 651h1M772 651h1M807 651h1M842 651h1M877 651h1M912 651h1M947 651h1M982 651h1M1017 651h1M1052 651h1M1087 651h1M1122 651h1M1157 651h1M1192 651h1M1227 651h1M1262 651h1M1297 651h1M1331 651h1M1366 651h1M1401 651h1M1436 651h1M1471 651h1M1506 651h1M1541 651h1M1576 651h1M1611 651h1M1646 651h1M1681 651h1M1716 651h1M1751 651h1M3 662h1M38 662h1M73 662h1M108 662h1M143 662h1M178 662h1M213 662h1M248 662h1M283 662h1M318 662h1M353 662h1M388 662h1M423 662h1M457 662h1M492 662h1M527 662h1M562 662h1M597 662h1M632 662h1M667 662h1M702 662h1M737 662h1M772 662h1M807 662h1M842 662h1M877 662h1M912 662h1M947 662h1M982 662h1M1017 662h1M1052 662h1M1087 662h1M1122 662h1M1157 662h1M1192 662h1M1227 662h1M1262 662h1M1297 662h1M1331 662h1M1366 662h1M1401 662h1M1436 662h1M1471 662h1M1506 662h1M1541 662h1M1576 662h1M1611 662h1M1646 662h1M1681 662h1M1716 662h1M1751 662h1M3 674h1M38 674h1M73 674h1M108 674h1M143 674h1M178 674h1M213 674h1M248 674h1M283 674h1M318 674h1M353 674h1M388 674h1M423 674h1M457 674h1M492 674h1M527 674h1M562 674h1M597 674h1M632 674h1M667 674h1M702 674h1M737 674h1M772 674h1M807 674h1M842 674h1M877 674h1M912 674h1M947 674h1M982 674h1M1017 674h1M1052 674h1M1087 674h1M1122 674h1M1157 674h1M1192 674h1M1227 674h1M1262 674h1M1297 674h1M1331 674h1M1366 674h1M1401 674h1M1436 674h1M1471 674h1M1506 674h1M1541 674h1M1576 674h1M1611 674h1M1646 674h1M1681 674h1M1716 674h1M1751 674h1M3 685h1M38 685h1M73 685h1M108 685h1M143 685h1M178 685h1M213 685h1M248 685h1M283 685h1M318 685h1M353 685h1M388 685h1M423 685h1M457 685h1M492 685h1M527 685h1M562 685h1M597 685h1M632 685h1M667 685h1M702 685h1M737 685h1M772 685h1M807 685h1M842 685h1M877 685h1M912 685h1M947 685h1M982 685h1M1017 685h1M1052 685h1M1087 685h1M1122 685h1M1157 685h1M1192 685h1M1227 685h1M1262 685h1M1297 685h1M1331 685h1M1366 685h1M1401 685h1M1436 685h1M1471 685h1M1506 685h1M1541 685h1M1576 685h1M1611 685h1M1646 685h1M1681 685h1M1716 685h1M1751 685h1M3 697h1M38 697h1M73 697h1M108 697h1M143 697h1M178 697h1M213 697h1M248 697h1M283 697h1M318 697h1M353 697h1M388 697h1M423 697h1M457 697h1M492 697h1M527 697h1M562 697h1M597 697h1M632 697h1M667 697h1M702 697h1M737 697h1M772 697h1M807 697h1M842 697h1M877 697h1M912 697h1M947 697h1M982 697h1M1017 697h1M1052 697h1M1087 697h1M1122 697h1M1157 697h1M1192 697h1M1227 697h1M1262 697h1M1297 697h1M1331 697h1M1366 697h1M1401 697h1M1436 697h1M1471 697h1M1506 697h1M1541 697h1M1576 697h1M1611 697h1M1646 697h1M1681 697h1M1716 697h1M1751 697h1M3 709h1M38 709h1M73 709h1M108 709h1M143 709h1M178 709h1M213 709h1M248 709h1M283 709h1M318 709h1M353 709h1M388 709h1M423 709h1M457 709h1M492 709h1M527 709h1M562 709h1M597 709h1M632 709h1M667 709h1M702 709h1M737 709h1M772 709h1M807 709h1M842 709h1M877 709h1M912 709h1M947 709h1M982 709h1M1017 709h1M1052 709h1M1087 709h1M1122 709h1M1157 709h1M1192 709h1M1227 709h1M1262 709h1M1297 709h1M1331 709h1M1366 709h1M1401 709h1M1436 709h1M1471 709h1M1506 709h1M1541 709h1M1576 709h1M1611 709h1M1646 709h1M1681 709h1M1716 709h1M1751 709h1M3 720h1M38 720h1M73 720h1M108 720h1M143 720h1M178 720h1M213 720h1M248 720h1M283 720h1M318 720h1M353 720h1M388 720h1M423 720h1M457 720h1M492 720h1M527 720h1M562 720h1M597 720h1M632 720h1M667 720h1M702 720h1M737 720h1M772 720h1M807 720h1M842 720h1M877 720h1M912 720h1M947 720h1M982 720h1M1017 720h1M1052 720h1M1087 720h1M1122 720h1M1157 720h1M1192 720h1M1227 720h1M1262 720h1M1297 720h1M1331 720h1M1366 720h1M1401 720h1M1436 720h1M1471 720h1M1506 720h1M1541 720h1M1576 720h1M1611 720h1M1646 720h1M1681 720h1M1716 720h1M1751 720h1M3 732h1M38 732h1M73 732h1M108 732h1M143 732h1M178 732h1M213 732h1M248 732h1M283 732h1M318 732h1M353 732h1M388 732h1M423 732h1M457 732h1M492 732h1M527 732h1M562 732h1M597 732h1M632 732h1M667 732h1M702 732h1M737 732h1M772 732h1M807 732h1M842 732h1M877 732h1M912 732h1M947 732h1M982 732h1M1017 732h1M1052 732h1M1087 732h1M1122 732h1M1157 732h1M1192 732h1M1227 732h1M1262 732h1M1297 732h1M1331 732h1M1366 732h1M1401 732h1M1436 732h1M1471 732h1M1506 732h1M1541 732h1M1576 732h1M1611 732h1M1646 732h1M1681 732h1M1716 732h1M1751 732h1M3 743h1M38 743h1M73 743h1M108 743h1M143 743h1M178 743h1M213 743h1M248 743h1M283 743h1M318 743h1M353 743h1M388 743h1M423 743h1M457 743h1M492 743h1M527 743h1M562 743h1M597 743h1M632 743h1M667 743h1M702 743h1M737 743h1M772 743h1M807 743h1M842 743h1M877 743h1M912 743h1M947 743h1M982 743h1M1017 743h1M1052 743h1M1087 743h1M1122 743h1M1157 743h1M1192 743h1M1227 743h1M1262 743h1M1297 743h1M1331 743h1M1366 743h1M1401 743h1M1436 743h1M1471 743h1M1506 743h1M1541 743h1M1576 743h1M1611 743h1M1646 743h1M1681 743h1M1716 743h1M1751 743h1M3 756h1M38 756h1M73 756h1M108 756h1M143 756h1M178 756h1M213 756h1M248 756h1M283 756h1M318 756h1M353 756h1M388 756h1M423 756h1M457 756h1M492 756h1M527 756h1M562 756h1M597 756h1M632 756h1M667 756h1M702 756h1M737 756h1M772 756h1M807 756h1M842 756h1M877 756h1M912 756h1M947 756h1M982 756h1M1017 756h1M1052 756h1M1087 756h1M1122 756h1M1157 756h1M1192 756h1M1227 756h1M1262 756h1M1297 756h1M1331 756h1M1366 756h1M1401 756h1M1436 756h1M1471 756h1M1506 756h1M1541 756h1M1576 756h1M1611 756h1M1646 756h1M1681 756h1M1716 756h1M1751 756h1M3 768h1M38 768h1M73 768h1M108 768h1M143 768h1M178 768h1M213 768h1M248 768h1M283 768h1M318 768h1M353 768h1M388 768h1M423 768h1M457 768h1M492 768h1M527 768h1M562 768h1M597 768h1M632 768h1M667 768h1M702 768h1M737 768h1M772 768h1M807 768h1M842 768h1M877 768h1M912 768h1M947 768h1M982 768h1M1017 768h1M1052 768h1M1087 768h1M1122 768h1M1157 768h1M1192 768h1M1227 768h1M1262 768h1M1297 768h1M1331 768h1M1366 768h1M1401 768h1M1436 768h1M1471 768h1M1506 768h1M1541 768h1M1576 768h1M1611 768h1M1646 768h1M1681 768h1M1716 768h1M1751 768h1M3 779h1M38 779h1M73 779h1M108 779h1M143 779h1M178 779h1M213 779h1M248 779h1M283 779h1M318 779h1M353 779h1M388 779h1M423 779h1M457 779h1M492 779h1M527 779h1M562 779h1M597 779h1M632 779h1M667 779h1M702 779h1M737 779h1M772 779h1M807 779h1M842 779h1M877 779h1M912 779h1M947 779h1M982 779h1M1017 779h1M1052 779h1M1087 779h1M1122 779h1M1157 779h1M1192 779h1M1227 779h1M1262 779h1M1297 779h1M1331 779h1M1366 779h1M1401 779h1M1436 779h1M1471 779h1M1506 779h1M1541 779h1M1576 779h1M1611 779h1M1646 779h1M1681 779h1M1716 779h1M1751 779h1M3 791h1M38 791h1M73 791h1M108 791h1M143 791h1M178 791h1M213 791h1M248 791h1M283 791h1M318 791h1M353 791h1M388 791h1M423 791h1M457 791h1M492 791h1M527 791h1M562 791h1M597 791h1M632 791h1M667 791h1M702 791h1M737 791h1M772 791h1M807 791h1M842 791h1M877 791h1M912 791h1M947 791h1M982 791h1M1017 791h1M1052 791h1M1087 791h1M1122 791h1M1157 791h1M1192 791h1M1227 791h1M1262 791h1M1297 791h1M1331 791h1M1366 791h1M1401 791h1M1436 791h1M1471 791h1M1506 791h1M1541 791h1M1576 791h1M1611 791h1M1646 791h1M1681 791h1M1716 791h1M1751 791h1M3 802h1M38 802h1M73 802h1M108 802h1M143 802h1M178 802h1M213 802h1M248 802h1M283 802h1M318 802h1M353 802h1M388 802h1M423 802h1M457 802h1M492 802h1M527 802h1M562 802h1M597 802h1M632 802h1M667 802h1M702 802h1M737 802h1M772 802h1M807 802h1M842 802h1M877 802h1M912 802h1M947 802h1M982 802h1M1017 802h1M1052 802h1M1087 802h1M1122 802h1M1157 802h1M1192 802h1M1227 802h1M1262 802h1M1297 802h1M1331 802h1M1366 802h1M1401 802h1M1436 802h1M1471 802h1M1506 802h1M1541 802h1M1576 802h1M1611 802h1M1646 802h1M1681 802h1M1716 802h1M1751 802h1M3 814h1M38 814h1M73 814h1M108 814h1M143 814h1M178 814h1M213 814h1M248 814h1M283 814h1M318 814h1M353 814h1M388 814h1M423 814h1M457 814h1M492 814h1M527 814h1M562 814h1M597 814h1M632 814h1M667 814h1M702 814h1M737 814h1M772 814h1M807 814h1M842 814h1M877 814h1M912 814h1M947 814h1M982 814h1M1017 814h1M1052 814h1M1087 814h1M1122 814h1M1157 814h1M1192 814h1M1227 814h1M1262 814h1M1297 814h1M1331 814h1M1366 814h1M1401 814h1M1436 814h1M1471 814h1M1506 814h1M1541 814h1M1576 814h1M1611 814h1M1646 814h1M1681 814h1M1716 814h1M1751 814h1M3 826h1M38 826h1M73 826h1M108 826h1M143 826h1M178 826h1M213 826h1M248 826h1M283 826h1M318 826h1M353 826h1M388 826h1M423 826h1M457 826h1M492 826h1M527 826h1M562 826h1M597 826h1M632 826h1M667 826h1M702 826h1M737 826h1M772 826h1M807 826h1M842 826h1M877 826h1M912 826h1M947 826h1M982 826h1M1017 826h1M1052 826h1M1087 826h1M1122 826h1M1157 826h1M1192 826h1M1227 826h1M1262 826h1M1297 826h1M1331 826h1M1366 826h1M1401 826h1M1436 826h1M1471 826h1M1506 826h1M1541 826h1M1576 826h1M1611 826h1M1646 826h1M1681 826h1M1716 826h1M1751 826h1M3 837h1M38 837h1M73 837h1M108 837h1M143 837h1M178 837h1M213 837h1M248 837h1M283 837h1M318 837h1M353 837h1M388 837h1M423 837h1M457 837h1M492 837h1M527 837h1M562 837h1M597 837h1M632 837h1M667 837h1M702 837h1M737 837h1M772 837h1M807 837h1M842 837h1M877 837h1M912 837h1M947 837h1M982 837h1M1017 837h1M1052 837h1M1087 837h1M1122 837h1M1157 837h1M1192 837h1M1227 837h1M1262 837h1M1297 837h1M1331 837h1M1366 837h1M1401 837h1M1436 837h1M1471 837h1M1506 837h1M1541 837h1M1576 837h1M1611 837h1M1646 837h1M1681 837h1M1716 837h1M1751 837h1M3 849h1M38 849h1M73 849h1M108 849h1M143 849h1M178 849h1M213 849h1M248 849h1M283 849h1M318 849h1M353 849h1M388 849h1M423 849h1M457 849h1M492 849h1M527 849h1M562 849h1M597 849h1M632 849h1M667 849h1M702 849h1M737 849h1M772 849h1M807 849h1M842 849h1M877 849h1M912 849h1M947 849h1M982 849h1M1017 849h1M1052 849h1M1087 849h1M1122 849h1M1157 849h1M1192 849h1M1227 849h1M1262 849h1M1297 849h1M1331 849h1M1366 849h1M1401 849h1M1436 849h1M1471 849h1M1506 849h1M1541 849h1M1576 849h1M1611 849h1M1646 849h1M1681 849h1M1716 849h1M1751 849h1M3 860h1M38 860h1M73 860h1M108 860h1M143 860h1M178 860h1M213 860h1M248 860h1M283 860h1M318 860h1M353 860h1M388 860h1M423 860h1M457 860h1M492 860h1M527 860h1M562 860h1M597 860h1M632 860h1M667 860h1M702 860h1M737 860h1M772 860h1M807 860h1M842 860h1M877 860h1M912 860h1M947 860h1M982 860h1M1017 860h1M1052 860h1M1087 860h1M1122 860h1M1157 860h1M1192 860h1M1227 860h1M1262 860h1M1297 860h1M1331 860h1M1366 860h1M1401 860h1M1436 860h1M1471 860h1M1506 860h1M1541 860h1M1576 860h1M1611 860h1M1646 860h1M1681 860h1M1716 860h1M1751 860h1M3 873h1M38 873h1M73 873h1M108 873h1M143 873h1M178 873h1M213 873h1M248 873h1M283 873h1M318 873h1M353 873h1M388 873h1M423 873h1M457 873h1M492 873h1M527 873h1M562 873h1M597 873h1M632 873h1M667 873h1M702 873h1M737 873h1M772 873h1M807 873h1M842 873h1M877 873h1M912 873h1M947 873h1M982 873h1M1017 873h1M1052 873h1M1087 873h1M1122 873h1M1157 873h1M1192 873h1M1227 873h1M1262 873h1M1297 873h1M1331 873h1M1366 873h1M1401 873h1M1436 873h1M1471 873h1M1506 873h1M1541 873h1M1576 873h1M1611 873h1M1646 873h1M1681 873h1M1716 873h1M1751 873h1M3 885h1M38 885h1M73 885h1M108 885h1M143 885h1M178 885h1M213 885h1M248 885h1M283 885h1M318 885h1M353 885h1M388 885h1M423 885h1M457 885h1M492 885h1M527 885h1M562 885h1M597 885h1M632 885h1M667 885h1M702 885h1M737 885h1M772 885h1M807 885h1M842 885h1M877 885h1M912 885h1M947 885h1M982 885h1M1017 885h1M1052 885h1M1087 885h1M1122 885h1M1157 885h1M1192 885h1M1227 885h1M1262 885h1M1297 885h1M1331 885h1M1366 885h1M1401 885h1M1436 885h1M1471 885h1M1506 885h1M1541 885h1M1576 885h1M1611 885h1M1646 885h1M1681 885h1M1716 885h1M1751 885h1M3 897h1M38 897h1M73 897h1M108 897h1M143 897h1M178 897h1M213 897h1M248 897h1M283 897h1M318 897h1M353 897h1M388 897h1M423 897h1M457 897h1M492 897h1M527 897h1M562 897h1M597 897h1M632 897h1M667 897h1M702 897h1M737 897h1M772 897h1M807 897h1M842 897h1M877 897h1M912 897h1M947 897h1M982 897h1M1017 897h1M1052 897h1M1087 897h1M1122 897h1M1157 897h1M1192 897h1M1227 897h1M1262 897h1M1297 897h1M1331 897h1M1366 897h1M1401 897h1M1436 897h1M1471 897h1M1506 897h1M1541 897h1M1576 897h1M1611 897h1M1646 897h1M1681 897h1M1716 897h1M1751 897h1M3 909h1M38 909h1M73 909h1M108 909h1M143 909h1M178 909h1M213 909h1M248 909h1M283 909h1M318 909h1M353 909h1M388 909h1M423 909h1M457 909h1M492 909h1M527 909h1M562 909h1M597 909h1M632 909h1M667 909h1M702 909h1M737 909h1M772 909h1M807 909h1M842 909h1M877 909h1M912 909h1M947 909h1M982 909h1M1017 909h1M1052 909h1M1087 909h1M1122 909h1M1157 909h1M1192 909h1M1227 909h1M1262 909h1M1297 909h1M1331 909h1M1366 909h1M1401 909h1M1436 909h1M1471 909h1M1506 909h1M1541 909h1M1576 909h1M1611 909h1M1646 909h1M1681 909h1M1716 909h1M1751 909h1M3 921h1M38 921h1M73 921h1M108 921h1M143 921h1M178 921h1M213 921h1M248 921h1M283 921h1M318 921h1M353 921h1M388 921h1M423 921h1M457 921h1M492 921h1M527 921h1M562 921h1M597 921h1M632 921h1M667 921h1M702 921h1M737 921h1M772 921h1M807 921h1M842 921h1M877 921h1M912 921h1M947 921h1M982 921h1M1017 921h1M1052 921h1M1087 921h1M1122 921h1M1157 921h1M1192 921h1M1227 921h1M1262 921h1M1297 921h1M1331 921h1M1366 921h1M1401 921h1M1436 921h1M1471 921h1M1506 921h1M1541 921h1M1576 921h1M1611 921h1M1646 921h1M1681 921h1M1716 921h1M1751 921h1M3 933h1M38 933h1M73 933h1M108 933h1M143 933h1M178 933h1M213 933h1M248 933h1M283 933h1M318 933h1M353 933h1M388 933h1M423 933h1M457 933h1M492 933h1M527 933h1M562 933h1M597 933h1M632 933h1M667 933h1M702 933h1M737 933h1M772 933h1M807 933h1M842 933h1M877 933h1M912 933h1M947 933h1M982 933h1M1017 933h1M1052 933h1M1087 933h1M1122 933h1M1157 933h1M1192 933h1M1227 933h1M1262 933h1M1297 933h1M1331 933h1M1366 933h1M1401 933h1M1436 933h1M1471 933h1M1506 933h1M1541 933h1M1576 933h1M1611 933h1M1646 933h1M1681 933h1M1716 933h1M1751 933h1M3 944h1M38 944h1M73 944h1M108 944h1M143 944h1M178 944h1M213 944h1M248 944h1M283 944h1M318 944h1M353 944h1M388 944h1M423 944h1M457 944h1M492 944h1M527 944h1M562 944h1M597 944h1M632 944h1M667 944h1M702 944h1M737 944h1M772 944h1M807 944h1M842 944h1M877 944h1M912 944h1M947 944h1M982 944h1M1017 944h1M1052 944h1M1087 944h1M1122 944h1M1157 944h1M1192 944h1M1227 944h1M1262 944h1M1297 944h1M1331 944h1M1366 944h1M1401 944h1M1436 944h1M1471 944h1M1506 944h1M1541 944h1M1576 944h1M1611 944h1M1646 944h1M1681 944h1M1716 944h1M1751 944h1M3 956h1M38 956h1M73 956h1M108 956h1M143 956h1M178 956h1M213 956h1M248 956h1M283 956h1M318 956h1M353 956h1M388 956h1M423 956h1M457 956h1M492 956h1M527 956h1M562 956h1M597 956h1M632 956h1M667 956h1M702 956h1M737 956h1M772 956h1M807 956h1M842 956h1M877 956h1M912 956h1M947 956h1M982 956h1M1017 956h1M1052 956h1M1087 956h1M1122 956h1M1157 956h1M1192 956h1M1227 956h1M1262 956h1M1297 956h1M1331 956h1M1366 956h1M1401 956h1M1436 956h1M1471 956h1M1506 956h1M1541 956h1M1576 956h1M1611 956h1M1646 956h1M1681 956h1M1716 956h1M1751 956h1M3 968h1M38 968h1M73 968h1M108 968h1M143 968h1M178 968h1M213 968h1M248 968h1M283 968h1M318 968h1M353 968h1M388 968h1M423 968h1M457 968h1M492 968h1M527 968h1M562 968h1M597 968h1M632 968h1M667 968h1M702 968h1M737 968h1M772 968h1M807 968h1M842 968h1M877 968h1M912 968h1M947 968h1M982 968h1M1017 968h1M1052 968h1M1087 968h1M1122 968h1M1157 968h1M1192 968h1M1227 968h1M1262 968h1M1297 968h1M1331 968h1M1366 968h1M1401 968h1M1436 968h1M1471 968h1M1506 968h1M1541 968h1M1576 968h1M1611 968h1M1646 968h1M1681 968h1M1716 968h1M1751 968h1M3 980h1M38 980h1M73 980h1M108 980h1M143 980h1M178 980h1M213 980h1M248 980h1M283 980h1M318 980h1M353 980h1M388 980h1M423 980h1M457 980h1M492 980h1M527 980h1M562 980h1M597 980h1M632 980h1M667 980h1M702 980h1M737 980h1M772 980h1M807 980h1M842 980h1M877 980h1M912 980h1M947 980h1M982 980h1M1017 980h1M1052 980h1M1087 980h1M1122 980h1M1157 980h1M1192 980h1M1227 980h1M1262 980h1M1297 980h1M1331 980h1M1366 980h1M1401 980h1M1436 980h1M1471 980h1M1506 980h1M1541 980h1M1576 980h1M1611 980h1M1646 980h1M1681 980h1M1716 980h1M1751 980h1" stroke="#b9b9b9" stroke-width="1" fill="none" transform="translate(0,0.5)"/>
<path d="M213 56h1M213 59h1M213 61h1M213 63h1M213 68h1M213 70h1M213 73h1M213 75h1M213 80h1M213 82h1M213 84h1M213 86h1M213 91h1M213 93h1M213 96h1M213 98h1M213 103h1M213 105h1M213 107h1M213 110h1M213 114h1M213 117h1M213 119h1M213 121h1M213 126h1M213 128h1M213 131h1M213 133h1M213 138h1M213 140h1M213 142h1M213 144h1M213 149h1M213 151h1M213 154h1M213 156h1M213 161h1M213 163h1M213 165h1M213 168h1M213 173h1M213 176h1M213 178h1M213 180h1M213 185h1M213 187h1M213 190h1M213 192h1M213 197h1M213 199h1M213 201h1M213 203h1M213 208h1M213 210h1M213 213h1M213 215h1M213 220h1M213 222h1M213 224h1M213 227h1M213 231h1M213 234h1M213 236h1M213 238h1M213 243h1M213 245h1M213 248h1M213 250h1M213 255h1M213 257h1M213 259h1M213 261h1M213 266h1M213 268h1M213 271h1M213 273h1M213 278h1M213 280h1M213 282h1M213 285h1M213 290h1M213 293h1M213 295h1M213 297h1M213 302h1M213 304h1M213 307h1M213 309h1M213 314h1M213 316h1M213 318h1M213 320h1M213 325h1M213 327h1M213 330h1M213 332h1M213 337h1M213 339h1M213 341h1M213 344h1M213 348h1M213 351h1M213 353h1M213 355h1M213 360h1M213 362h1M213 365h1M213 367h1M213 372h1M213 374h1M213 376h1M213 378h1M213 383h1M213 385h1M213 388h1M213 390h1M213 395h1M213 397h1M213 399h1M213 402h1M213 407h1M213 410h1M213 412h1M213 414h1M213 419h1M213 421h1M213 424h1M213 426h1M213 431h1M213 433h1M213 435h1M213 437h1M213 442h1M213 444h1M213 447h1M213 449h1M213 454h1M213 456h1M213 458h1M213 461h1M213 465h1M213 468h1M213 470h1M213 472h1M213 477h1M213 479h1M213 482h1M213 484h1M213 489h1M213 491h1M213 493h1M213 495h1M213 500h1M213 502h1M213 505h1M213 507h1M213 512h1M213 514h1M213 516h1M213 519h1M213 524h1M213 527h1M213 529h1M213 531h1M213 536h1M213 538h1M213 541h1M213 543h1M213 548h1M213 550h1M213 552h1M213 554h1M213 559h1M213 561h1M213 564h1M213 566h1M213 571h1M213 573h1M213 575h1M213 578h1M213 582h1M213 585h1M213 587h1M213 589h1M213 594h1M213 596h1M213 599h1M213 601h1M213 606h1M213 608h1M213 610h1M213 612h1M213 617h1M213 619h1M213 622h1M213 624h1M213 629h1M213 631h1M213 633h1M213 636h1M213 641h1M213 644h1M213 646h1M213 648h1M213 653h1M213 655h1M213 658h1M213 660h1M213 665h1M213 667h1M213 669h1M213 671h1M213 676h1M213 678h1M213 681h1M213 683h1M213 688h1M213 690h1M213 692h1M213 695h1M213 699h1M213 702h1M213 704h1M213 706h1M213 711h1M213 713h1M213 716h1M213 718h1M213 723h1M213 725h1M213 727h1M213 729h1M213 734h1M213 736h1M213 739h1M213 741h1M213 746h1M213 748h1M213 750h1M213 753h1M213 758h1M213 761h1M213 763h1M213 765h1M213 770h1M213 772h1M213 775h1M213 777h1M213 782h1M213 784h1M213 786h1M213 788h1M213 793h1M213 795h1M213 798h1M213 800h1M213 805h1M213 807h1M213 809h1M213 812h1M213 816h1M213 819h1M213 821h1M213 823h1M213 828h1M213 830h1M213 833h1M213 835h1M213 840h1M213 842h1M213 844h1M213 846h1M213 851h1M213 853h1M213 856h1M213 858h1M213 863h1M213 865h1M213 867h1M213 870h1M213 875h1M213 878h1M213 880h1M213 883h1M213 887h1M213 890h1M213 892h1M213 894h1M213 899h1M213 902h1M213 904h1M213 906h1M213 911h1M213 913h1M213 916h1M213 918h1M213 923h1M213 925h1M213 928h1M213 930h1M213 935h1M213 937h1M213 940h1M213 942h1M213 947h1M213 949h1M213 952h1M213 954h1M213 959h1M213 961h1M213 963h1M213 966h1M213 971h1M213 973h1M213 975h1M213 978h1M213 982h1M213 985h1M213 987h1M213 990h1M388 56h1M388 59h1M388 61h1M388 63h1M388 68h1M388 70h1M388 73h1M388 75h1M388 80h1M388 82h1M388 84h1M388 86h1M388 91h1M388 93h1M388 96h1M388 98h1M388 103h1M388 105h1M388 107h1M388 110h1M388 114h1M388 117h1M388 119h1M388 121h1M388 126h1M388 128h1M388 131h1M388 133h1M388 138h1M388 140h1M388 142h1M388 144h1M388 149h1M388 151h1M388 154h1M388 156h1M388 161h1M388 163h1M388 165h1M388 168h1M388 173h1M388 176h1M388 178h1M388 180h1M388 185h1M388 187h1M388 190h1M388 192h1M388 197h1M388 199h1M388 201h1M388 203h1M388 208h1M388 210h1M388 213h1M388 215h1M388 220h1M388 222h1M388 224h1M388 227h1M388 231h1M388 234h1M388 236h1M388 238h1M388 243h1M388 245h1M388 248h1M388 250h1M388 255h1M388 257h1M388 259h1M388 261h1M388 266h1M388 268h1M388 271h1M388 273h1M388 278h1M388 280h1M388 282h1M388 285h1M388 290h1M388 293h1M388 295h1M388 297h1M388 302h1M388 304h1M388 307h1M388 309h1M388 314h1M388 316h1M388 318h1M388 320h1M388 325h1M388 327h1M388 330h1M388 332h1M388 337h1M388 339h1M388 341h1M388 344h1M388 348h1M388 351h1M388 353h1M388 355h1M388 360h1M388 362h1M388 365h1M388 367h1M388 372h1M388 374h1M388 376h1M388 378h1M388 383h1M388 385h1M388 388h1M388 390h1M388 395h1M388 397h1M388 399h1M388 402h1M388 407h1M388 410h1M388 412h1M388 414h1M388 419h1M388 421h1M388 424h1M388 426h1M388 431h1M388 433h1M388 435h1M388 437h1M388 442h1M388 444h1M388 447h1M388 449h1M388 454h1M388 456h1M388 458h1M388 461h1M388 465h1M388 468h1M388 470h1M388 472h1M388 477h1M388 479h1M388 482h1M388 484h1M388 489h1M388 491h1M388 493h1M388 495h1M388 500h1M388 502h1M388 505h1M388 507h1M388 512h1M388 514h1M388 516h1M388 519h1M388 524h1M388 527h1M388 529h1M388 531h1M388 536h1M388 538h1M388 541h1M388 543h1M388 548h1M388 550h1M388 552h1M388 554h1M388 559h1M388 561h1M388 564h1M388 566h1M388 571h1M388 573h1M388 575h1M388 578h1M388 582h1M388 585h1M388 587h1M388 589h1M388 594h1M388 596h1M388 599h1M388 601h1M388 606h1M388 608h1M388 610h1M388 612h1M388 617h1M388 619h1M388 622h1M388 624h1M388 629h1M388 631h1M388 633h1M388 636h1M388 641h1M388 644h1M388 646h1M388 648h1M388 653h1M388 655h1M388 658h1M388 660h1M388 665h1M388 667h1M388 669h1M388 671h1M388 676h1M388 678h1M388 681h1M388 683h1M388 688h1M388 690h1M388 692h1M388 695h1M388 699h1M388 702h1M388 704h1M388 706h1M388 711h1M388 713h1M388 716h1M388 718h1M388 723h1M388 725h1M388 727h1M388 729h1M388 734h1M388 736h1M388 739h1M388 741h1M388 746h1M388 748h1M388 750h1M388 753h1M388 758h1M388 761h1M388 763h1M388 765h1M388 770h1M388 772h1M388 775h1M388 777h1M388 782h1M388 784h1M388 786h1M388 788h1M388 793h1M388 795h1M388 798h1M388 800h1M388 805h1M388 807h1M388 809h1M388 812h1M388 816h1M388 819h1M388 821h1M388 823h1M388 828h1M388 830h1M388 833h1M388 835h1M388 840h1M388 842h1M388 844h1M388 846h1M388 851h1M388 853h1M388 856h1M388 858h1M388 863h1M388 865h1M388 867h1M388 870h1M388 875h1M388 878h1M388 880h1M388 883h1M388 887h1M388 890h1M388 892h1M388 894h1M388 899h1M388 902h1M388 904h1M388 906h1M388 911h1M388 913h1M388 916h1M388 918h1M388 923h1M388 925h1M388 928h1M388 930h1M388 935h1M388 937h1M388 940h1M388 942h1M388 947h1M388 949h1M388 952h1M388 954h1M388 959h1M388 961h1M388 963h1M388 966h1M388 971h1M388 973h1M388 975h1M388 978h1M388 982h1M388 985h1M388 987h1M388 990h1M562 56h1M562 59h1M562 61h1M562 63h1M562 68h1M562 70h1M562 73h1M562 75h1M562 80h1M562 82h1M562 84h1M562 86h1M562 91h1M562 93h1M562 96h1M562 98h1M562 103h1M562 105h1M562 107h1M562 110h1M562 114h1M562 117h1M562 119h1M562 121h1M562 126h1M562 128h1M562 131h1M562 133h1M562 138h1M562 140h1M562 142h1M562 144h1M562 149h1M562 151h1M562 154h1M562 156h1M562 161h1M562 163h1M562 165h1M562 168h1M562 173h1M562 176h1M562 178h1M562 180h1M562 185h1M562 187h1M562 190h1M562 192h1M562 197h1M562 199h1M562 201h1M562 203h1M562 208h1M562 210h1M562 213h1M562 215h1M562 220h1M562 222h1M562 224h1M562 227h1M562 231h1M562 234h1M562 236h1M562 238h1M562 243h1M562 245h1M562 248h1M562 250h1M562 255h1M562 257h1M562 259h1M562 261h1M562 266h1M562 268h1M562 271h1M562 273h1M562 278h1M562 280h1M562 282h1M562 285h1M562 290h1M562 293h1M562 295h1M562 297h1M562 302h1M562 304h1M562 307h1M562 309h1M562 314h1M562 316h1M562 318h1M562 320h1M562 325h1M562 327h1M562 330h1M562 332h1M562 337h1M562 339h1M562 341h1M562 344h1M562 348h1M562 351h1M562 353h1M562 355h1M562 360h1M562 362h1M562 365h1M562 367h1M562 372h1M562 374h1M562 376h1M562 378h1M562 383h1M562 385h1M562 388h1M562 390h1M562 395h1M562 397h1M562 399h1M562 402h1M562 407h1M562 410h1M562 412h1M562 414h1M562 419h1M562 421h1M562 424h1M562 426h1M562 431h1M562 433h1M562 435h1M562 437h1M562 442h1M562 444h1M562 447h1M562 449h1M562 454h1M562 456h1M562 458h1M562 461h1M562 465h1M562 468h1M562 470h1M562 472h1M562 477h1M562 479h1M562 482h1M562 484h1M562 489h1M562 491h1M562 493h1M562 495h1M562 500h1M562 502h1M562 505h1M562 507h1M562 512h1M562 514h1M562 516h1M562 519h1M562 524h1M562 527h1M562 529h1M562 531h1M562 536h1M562 538h1M562 541h1M562 543h1M562 548h1M562 550h1M562 552h1M562 554h1M562 559h1M562 561h1M562 564h1M562 566h1M562 571h1M562 573h1M562 575h1M562 578h1M562 582h1M562 585h1M562 587h1M562 589h1M562 594h1M562 596h1M562 599h1M562 601h1M562 606h1M562 608h1M562 610h1M562 612h1M562 617h1M562 619h1M562 622h1M562 624h1M562 629h1M562 631h1M562 633h1M562 636h1M562 641h1M562 644h1M562 646h1M562 648h1M562 653h1M562 655h1M562 658h1M562 660h1M562 665h1M562 667h1M562 669h1M562 671h1M562 676h1M562 678h1M562 681h1M562 683h1M562 688h1M562 690h1M562 692h1M562 695h1M562 699h1M562 702h1M562 704h1M562 706h1M562 711h1M562 713h1M562 716h1M562 718h1M562 723h1M562 725h1M562 727h1M562 729h1M562 734h1M562 736h1M562 739h1M562 741h1M562 746h1M562 748h1M562 750h1M562 753h1M562 758h1M562 761h1M562 763h1M562 765h1M562 770h1M562 772h1M562 775h1M562 777h1M562 782h1M562 784h1M562 786h1M562 788h1M562 793h1M562 795h1M562 798h1M562 800h1M562 805h1M562 807h1M562 809h1M562 812h1M562 816h1M562 819h1M562 821h1M562 823h1M562 828h1M562 830h1M562 833h1M562 835h1M562 840h1M562 842h1M562 844h1M562 846h1M562 851h1M562 853h1M562 856h1M562 858h1M562 863h1M562 865h1M562 867h1M562 870h1M562 875h1M562 878h1M562 880h1M562 883h1M562 887h1M562 890h1M562 892h1M562 894h1M562 899h1M562 902h1M562 904h1M562 906h1M562 911h1M562 913h1M562 916h1M562 918h1M562 923h1M562 925h1M562 928h1M562 930h1M562 935h1M562 937h1M562 940h1M562 942h1M562 947h1M562 949h1M562 952h1M562 954h1M562 959h1M562 961h1M562 963h1M562 966h1M562 971h1M562 973h1M562 975h1M562 978h1M562 982h1M562 985h1M562 987h1M562 990h1M737 56h1M737 59h1M737 61h1M737 63h1M737 68h1M737 70h1M737 73h1M737 75h1M737 80h1M737 82h1M737 84h1M737 86h1M737 91h1M737 93h1M737 96h1M737 98h1M737 103h1M737 105h1M737 107h1M737 110h1M737 114h1M737 117h1M737 119h1M737 121h1M737 126h1M737 128h1M737 131h1M737 133h1M737 138h1M737 140h1M737 142h1M737 144h1M737 149h1M737 151h1M737 154h1M737 156h1M737 161h1M737 163h1M737 165h1M737 168h1M737 173h1M737 176h1M737 178h1M737 180h1M737 185h1M737 187h1M737 190h1M737 192h1M737 197h1M737 199h1M737 201h1M737 203h1M737 208h1M737 210h1M737 213h1M737 215h1M737 220h1M737 222h1M737 224h1M737 227h1M737 231h1M737 234h1M737 236h1M737 238h1M737 243h1M737 245h1M737 248h1M737 250h1M737 255h1M737 257h1M737 259h1M737 261h1M737 266h1M737 268h1M737 271h1M737 273h1M737 278h1M737 280h1M737 282h1M737 285h1M737 290h1M737 293h1M737 295h1M737 297h1M737 302h1M737 304h1M737 307h1M737 309h1M737 314h1M737 316h1M737 318h1M737 320h1M737 325h1M737 327h1M737 330h1M737 332h1M737 337h1M737 339h1M737 341h1M737 344h1M737 348h1M737 351h1M737 353h1M737 355h1M737 360h1M737 362h1M737 365h1M737 367h1M737 372h1M737 374h1M737 376h1M737 378h1M737 383h1M737 385h1M737 388h1M737 390h1M737 395h1M737 397h1M737 399h1M737 402h1M737 407h1M737 410h1M737 412h1M737 414h1M737 419h1M737 421h1M737 424h1M737 426h1M737 431h1M737 433h1M737 435h1M737 437h1M737 442h1M737 444h1M737 447h1M737 449h1M737 454h1M737 456h1M737 458h1M737 461h1M737 465h1M737 468h1M737 470h1M737 472h1M737 477h1M737 479h1M737 482h1M737 484h1M737 489h1M737 491h1M737 493h1M737 495h1M737 500h1M737 502h1M737 505h1M737 507h1M737 512h1M737 514h1M737 516h1M737 519h1M737 524h1M737 527h1M737 529h1M737 531h1M737 536h1M737 538h1M737 541h1M737 543h1M737 548h1M737 550h1M737 552h1M737 554h1M737 559h1M737 561h1M737 564h1M737 566h1M737 571h1M737 573h1M737 575h1M737 578h1M737 582h1M737 585h1M737 587h1M737 589h1M737 594h1M737 596h1M737 599h1M737 601h1M737 606h1M737 608h1M737 610h1M737 612h1M737 617h1M737 619h1M737 622h1M737 624h1M737 629h1M737 631h1M737 633h1M737 636h1M737 641h1M737 644h1M737 646h1M737 648h1M737 653h1M737 655h1M737 658h1M737 660h1M737 665h1M737 667h1M737 669h1M737 671h1M737 676h1M737 678h1M737 681h1M737 683h1M737 688h1M737 690h1M737 692h1M737 695h1M737 699h1M737 702h1M737 704h1M737 706h1M737 711h1M737 713h1M737 716h1M737 718h1M737 723h1M737 725h1M737 727h1M737 729h1M737 734h1M737 736h1M737 739h1M737 741h1M737 746h1M737 748h1M737 750h1M737 753h1M737 758h1M737 761h1M737 763h1M737 765h1M737 770h1M737 772h1M737 775h1M737 777h1M737 782h1M737 784h1M737 786h1M737 788h1M737 793h1M737 795h1M737 798h1M737 800h1M737 805h1M737 807h1M737 809h1M737 812h1M737 816h1M737 819h1M737 821h1M737 823h1M737 828h1M737 830h1M737 833h1M737 835h1M737 840h1M737 842h1M737 844h1M737 846h1M737 851h1M737 853h1M737 856h1M737 858h1M737 863h1M737 865h1M737 867h1M737 870h1M737 875h1M737 878h1M737 880h1M737 883h1M737 887h1M737 890h1M737 892h1M737 894h1M737 899h1M737 902h1M737 904h1M737 906h1M737 911h1M737 913h1M737 916h1M737 918h1M737 923h1M737 925h1M737 928h1M737 930h1M737 935h1M737 937h1M737 940h1M737 942h1M737 947h1M737 949h1M737 952h1M737 954h1M737 959h1M737 961h1M737 963h1M737 966h1M737 971h1M737 973h1M737 975h1M737 978h1M737 982h1M737 985h1M737 987h1M737 990h1M912 56h1M912 59h1M912 61h1M912 63h1M912 68h1M912 70h1M912 73h1M912 75h1M912 80h1M912 82h1M912 84h1M912 86h1M912 91h1M912 93h1M912 96h1M912 98h1M912 103h1M912 105h1M912 107h1M912 110h1M912 114h1M912 117h1M912 119h1M912 121h1M912 126h1M912 128h1M912 131h1M912 133h1M912 138h1M912 140h1M912 142h1M912 144h1M912 149h1M912 151h1M912 154h1M912 156h1M912 161h1M912 163h1M912 165h1M912 168h1M912 173h1M912 176h1M912 178h1M912 180h1M912 185h1M912 187h1M912 190h1M912 192h1M912 197h1M912 199h1M912 201h1M912 203h1M912 208h1M912 210h1M912 213h1M912 215h1M912 220h1M912 222h1M912 224h1M912 227h1M912 231h1M912 234h1M912 236h1M912 238h1M912 243h1M912 245h1M912 248h1M912 250h1M912 255h1M912 257h1M912 259h1M912 261h1M912 266h1M912 268h1M912 271h1M912 273h1M912 278h1M912 280h1M912 282h1M912 285h1M912 290h1M912 293h1M912 295h1M912 297h1M912 302h1M912 304h1M912 307h1M912 309h1M912 314h1M912 316h1M912 318h1M912 320h1M912 325h1M912 327h1M912 330h1M912 332h1M912 337h1M912 339h1M912 341h1M912 344h1M912 348h1M912 351h1M912 353h1M912 355h1M912 360h1M912 362h1M912 365h1M912 367h1M912 372h1M912 374h1M912 376h1M912 378h1M912 383h1M912 385h1M912 388h1M912 390h1M912 395h1M912 397h1M912 399h1M912 402h1M912 407h1M912 410h1M912 412h1M912 414h1M912 419h1M912 421h1M912 424h1M912 426h1M912 431h1M912 433h1M912 435h1M912 437h1M912 442h1M912 444h1M912 447h1M912 449h1M912 454h1M912 456h1M912 458h1M912 461h1M912 465h1M912 468h1M912 470h1M912 472h1M912 477h1M912 479h1M912 482h1M912 484h1M912 489h1M912 491h1M912 493h1M912 495h1M912 500h1M912 502h1M912 505h1M912 507h1M912 512h1M912 514h1M912 516h1M912 519h1M912 524h1M912 527h1M912 529h1M912 531h1M912 536h1M912 538h1M912 541h1M912 543h1M912 548h1M912 550h1M912 552h1M912 554h1M912 559h1M912 561h1M912 564h1M912 566h1M912 571h1M912 573h1M912 575h1M912 578h1M912 582h1M912 585h1M912 587h1M912 589h1M912 594h1M912 596h1M912 599h1M912 601h1M912 606h1M912 608h1M912 610h1M912 612h1M912 617h1M912 619h1M912 622h1M912 624h1M912 629h1M912 631h1M912 633h1M912 636h1M912 641h1M912 644h1M912 646h1M912 648h1M912 653h1M912 655h1M912 658h1M912 660h1M912 665h1M912 667h1M912 669h1M912 671h1M912 676h1M912 678h1M912 681h1M912 683h1M912 688h1M912 690h1M912 692h1M912 695h1M912 699h1M912 702h1M912 704h1M912 706h1M912 711h1M912 713h1M912 716h1M912 718h1M912 723h1M912 725h1M912 727h1M912 729h1M912 734h1M912 736h1M912 739h1M912 741h1M912 746h1M912 748h1M912 750h1M912 753h1M912 758h1M912 761h1M912 763h1M912 765h1M912 770h1M912 772h1M912 775h1M912 777h1M912 782h1M912 784h1M912 786h1M912 788h1M912 793h1M912 795h1M912 798h1M912 800h1M912 805h1M912 807h1M912 809h1M912 812h1M912 816h1M912 819h1M912 821h1M912 823h1M912 828h1M912 830h1M912 833h1M912 835h1M912 840h1M912 842h1M912 844h1M912 846h1M912 851h1M912 853h1M912 856h1M912 858h1M912 863h1M912 865h1M912 867h1M912 870h1M912 875h1M912 878h1M912 880h1M912 883h1M912 887h1M912 890h1M912 892h1M912 894h1M912 899h1M912 902h1M912 904h1M912 906h1M912 911h1M912 913h1M912 916h1M912 918h1M912 923h1M912 925h1M912 928h1M912 930h1M912 935h1M912 937h1M912 940h1M912 942h1M912 947h1M912 949h1M912 952h1M912 954h1M912 959h1M912 961h1M912 963h1M912 966h1M912 971h1M912 973h1M912 975h1M912 978h1M912 982h1M912 985h1M912 987h1M912 990h1M1087 56h1M1087 59h1M1087 61h1M1087 63h1M1087 68h1M1087 70h1M1087 73h1M1087 75h1M1087 80h1M1087 82h1M1087 84h1M1087 86h1M1087 91h1M1087 93h1M1087 96h1M1087 98h1M1087 103h1M1087 105h1M1087 107h1M1087 110h1M1087 114h1M1087 117h1M1087 119h1M1087 121h1M1087 126h1M1087 128h1M1087 131h1M1087 133h1M1087 138h1M1087 140h1M1087 142h1M1087 144h1M1087 149h1M1087 151h1M1087 154h1M1087 156h1M1087 161h1M1087 163h1M1087 165h1M1087 168h1M1087 173h1M1087 176h1M1087 178h1M1087 180h1M1087 185h1M1087 187h1M1087 190h1M1087 192h1M1087 197h1M1087 199h1M1087 201h1M1087 203h1M1087 208h1M1087 210h1M1087 213h1M1087 215h1M1087 220h1M1087 222h1M1087 224h1M1087 227h1M1087 231h1M1087 234h1M1087 236h1M1087 238h1M1087 243h1M1087 245h1M1087 248h1M1087 250h1M1087 255h1M1087 257h1M1087 259h1M1087 261h1M1087 266h1M1087 268h1M1087 271h1M1087 273h1M1087 278h1M1087 280h1M1087 282h1M1087 285h1M1087 290h1M1087 293h1M1087 295h1M1087 297h1M1087 302h1M1087 304h1M1087 307h1M1087 309h1M1087 314h1M1087 316h1M1087 318h1M1087 320h1M1087 325h1M1087 327h1M1087 330h1M1087 332h1M1087 337h1M1087 339h1M1087 341h1M1087 344h1M1087 348h1M1087 351h1M1087 353h1M1087 355h1M1087 360h1M1087 362h1M1087 365h1M1087 367h1M1087 372h1M1087 374h1M1087 376h1M1087 378h1M1087 383h1M1087 385h1M1087 388h1M1087 390h1M1087 395h1M1087 397h1M1087 399h1M1087 402h1M1087 407h1M1087 410h1M1087 412h1M1087 414h1M1087 419h1M1087 421h1M1087 424h1M1087 426h1M1087 431h1M1087 433h1M1087 435h1M1087 437h1M1087 442h1M1087 444h1M1087 447h1M1087 449h1M1087 454h1M1087 456h1M1087 458h1M1087 461h1M1087 465h1M1087 468h1M1087 470h1M1087 472h1M1087 477h1M1087 479h1M1087 482h1M1087 484h1M1087 489h1M1087 491h1M1087 493h1M1087 495h1M1087 500h1M1087 502h1M1087 505h1M1087 507h1M1087 512h1M1087 514h1M1087 516h1M1087 519h1M1087 524h1M1087 527h1M1087 529h1M1087 531h1M1087 536h1M1087 538h1M1087 541h1M1087 543h1M1087 548h1M1087 550h1M1087 552h1M1087 554h1M1087 559h1M1087 561h1M1087 564h1M1087 566h1M1087 571h1M1087 573h1M1087 575h1M1087 578h1M1087 582h1M1087 585h1M1087 587h1M1087 589h1M1087 594h1M1087 596h1M1087 599h1M1087 601h1M1087 606h1M1087 608h1M1087 610h1M1087 612h1M1087 617h1M1087 619h1M1087 622h1M1087 624h1M1087 629h1M1087 631h1M1087 633h1M1087 636h1M1087 641h1M1087 644h1M1087 646h1M1087 648h1M1087 653h1M1087 655h1M1087 658h1M1087 660h1M1087 665h1M1087 667h1M1087 669h1M1087 671h1M1087 676h1M1087 678h1M1087 681h1M1087 683h1M1087 688h1M1087 690h1M1087 692h1M1087 695h1M1087 699h1M1087 702h1M1087 704h1M1087 706h1M1087 711h1M1087 713h1M1087 716h1M1087 718h1M1087 723h1M1087 725h1M1087 727h1M1087 729h1M1087 734h1M1087 736h1M1087 739h1M1087 741h1M1087 746h1M1087 748h1M1087 750h1M1087 753h1M1087 758h1M1087 761h1M1087 763h1M1087 765h1M1087 770h1M1087 772h1M1087 775h1M1087 777h1M1087 782h1M1087 784h1M1087 786h1M1087 788h1M1087 793h1M1087 795h1M1087 798h1M1087 800h1M1087 805h1M1087 807h1M1087 809h1M1087 812h1M1087 816h1M1087 819h1M1087 821h1M1087 823h1M1087 828h1M1087 830h1M1087 833h1M1087 835h1M1087 840h1M1087 842h1M1087 844h1M1087 846h1M1087 851h1M1087 853h1M1087 856h1M1087 858h1M1087 863h1M1087 865h1M1087 867h1M1087 870h1M1087 875h1M1087 878h1M1087 880h1M1087 883h1M1087 887h1M1087 890h1M1087 892h1M1087 894h1M1087 899h1M1087 902h1M1087 904h1M1087 906h1M1087 911h1M1087 913h1M1087 916h1M1087 918h1M1087 923h1M1087 925h1M1087 928h1M1087 930h1M1087 935h1M1087 937h1M1087 940h1M1087 942h1M1087 947h1M1087 949h1M1087 952h1M1087 954h1M1087 959h1M1087 961h1M1087 963h1M1087 966h1M1087 971h1M1087 973h1M1087 975h1M1087 978h1M1087 982h1M1087 985h1M1087 987h1M1087 990h1M1262 56h1M1262 59h1M1262 61h1M1262 63h1M1262 68h1M1262 70h1M1262 73h1M1262 75h1M1262 80h1M1262 82h1M1262 84h1M1262 86h1M1262 91h1M1262 93h1M1262 96h1M1262 98h1M1262 103h1M1262 105h1M1262 107h1M1262 110h1M1262 114h1M1262 117h1M1262 119h1M1262 121h1M1262 126h1M1262 128h1M1262 131h1M1262 133h1M1262 138h1M1262 140h1M1262 142h1M1262 144h1M1262 149h1M1262 151h1M1262 154h1M1262 156h1M1262 161h1M1262 163h1M1262 165h1M1262 168h1M1262 173h1M1262 176h1M1262 178h1M1262 180h1M1262 185h1M1262 187h1M1262 190h1M1262 192h1M1262 197h1M1262 199h1M1262 201h1M1262 203h1M1262 208h1M1262 210h1M1262 213h1M1262 215h1M1262 220h1M1262 222h1M1262 224h1M1262 227h1M1262 231h1M1262 234h1M1262 236h1M1262 238h1M1262 243h1M1262 245h1M1262 248h1M1262 250h1M1262 255h1M1262 257h1M1262 259h1M1262 261h1M1262 266h1M1262 268h1M1262 271h1M1262 273h1M1262 278h1M1262 280h1M1262 282h1M1262 285h1M1262 290h1M1262 293h1M1262 295h1M1262 297h1M1262 302h1M1262 304h1M1262 307h1M1262 309h1M1262 314h1M1262 316h1M1262 318h1M1262 320h1M1262 325h1M1262 327h1M1262 330h1M1262 332h1M1262 337h1M1262 339h1M1262 341h1M1262 344h1M1262 348h1M1262 351h1M1262 353h1M1262 355h1M1262 360h1M1262 362h1M1262 365h1M1262 367h1M1262 372h1M1262 374h1M1262 376h1M1262 378h1M1262 383h1M1262 385h1M1262 388h1M1262 390h1M1262 395h1M1262 397h1M1262 399h1M1262 402h1M1262 407h1M1262 410h1M1262 412h1M1262 414h1M1262 419h1M1262 421h1M1262 424h1M1262 426h1M1262 431h1M1262 433h1M1262 435h1M1262 437h1M1262 442h1M1262 444h1M1262 447h1M1262 449h1M1262 454h1M1262 456h1M1262 458h1M1262 461h1M1262 465h1M1262 468h1M1262 470h1M1262 472h1M1262 477h1M1262 479h1M1262 482h1M1262 484h1M1262 489h1M1262 491h1M1262 493h1M1262 495h1M1262 500h1M1262 502h1M1262 505h1M1262 507h1M1262 512h1M1262 514h1M1262 516h1M1262 519h1M1262 524h1M1262 527h1M1262 529h1M1262 531h1M1262 536h1M1262 538h1M1262 541h1M1262 543h1M1262 548h1M1262 550h1M1262 552h1M1262 554h1M1262 559h1M1262 561h1M1262 564h1M1262 566h1M1262 571h1M1262 573h1M1262 575h1M1262 578h1M1262 582h1M1262 585h1M1262 587h1M1262 589h1M1262 594h1M1262 596h1M1262 599h1M1262 601h1M1262 606h1M1262 608h1M1262 610h1M1262 612h1M1262 617h1M1262 619h1M1262 622h1M1262 624h1M1262 629h1M1262 631h1M1262 633h1M1262 636h1M1262 641h1M1262 644h1M1262 646h1M1262 648h1M1262 653h1M1262 655h1M1262 658h1M1262 660h1M1262 665h1M1262 667h1M1262 669h1M1262 671h1M1262 676h1M1262 678h1M1262 681h1M1262 683h1M1262 688h1M1262 690h1M1262 692h1M1262 695h1M1262 699h1M1262 702h1M1262 704h1M1262 706h1M1262 711h1M1262 713h1M1262 716h1M1262 718h1M1262 723h1M1262 725h1M1262 727h1M1262 729h1M1262 734h1M1262 736h1M1262 739h1M1262 741h1M1262 746h1M1262 748h1M1262 750h1M1262 753h1M1262 758h1M1262 761h1M1262 763h1M1262 765h1M1262 770h1M1262 772h1M1262 775h1M1262 777h1M1262 782h1M1262 784h1M1262 786h1M1262 788h1M1262 793h1M1262 795h1M1262 798h1M1262 800h1M1262 805h1M1262 807h1M1262 809h1M1262 812h1M1262 816h1M1262 819h1M1262 821h1M1262 823h1M1262 828h1M1262 830h1M1262 833h1M1262 835h1M1262 840h1M1262 842h1M1262 844h1M1262 846h1M1262 851h1M1262 853h1M1262 856h1M1262 858h1M1262 863h1M1262 865h1M1262 867h1M1262 870h1M1262 875h1M1262 878h1M1262 880h1M1262 883h1M1262 887h1M1262 890h1M1262 892h1M1262 894h1M1262 899h1M1262 902h1M1262 904h1M1262 906h1M1262 911h1M1262 913h1M1262 916h1M1262 918h1M1262 923h1M1262 925h1M1262 928h1M1262 930h1M1262 935h1M1262 937h1M1262 940h1M1262 942h1M1262 947h1M1262 949h1M1262 952h1M1262 954h1M1262 959h1M1262 961h1M1262 963h1M1262 966h1M1262 971h1M1262 973h1M1262 975h1M1262 978h1M1262 982h1M1262 985h1M1262 987h1M1262 990h1M1436 56h1M1436 59h1M1436 61h1M1436 63h1M1436 68h1M1436 70h1M1436 73h1M1436 75h1M1436 80h1M1436 82h1M1436 84h1M1436 86h1M1436 91h1M1436 93h1M1436 96h1M1436 98h1M1436 103h1M1436 105h1M1436 107h1M1436 110h1M1436 114h1M1436 117h1M1436 119h1M1436 121h1M1436 126h1M1436 128h1M1436 131h1M1436 133h1M1436 138h1M1436 140h1M1436 142h1M1436 144h1M1436 149h1M1436 151h1M1436 154h1M1436 156h1M1436 161h1M1436 163h1M1436 165h1M1436 168h1M1436 173h1M1436 176h1M1436 178h1M1436 180h1M1436 185h1M1436 187h1M1436 190h1M1436 192h1M1436 197h1M1436 199h1M1436 201h1M1436 203h1M1436 208h1M1436 210h1M1436 213h1M1436 215h1M1436 220h1M1436 222h1M1436 224h1M1436 227h1M1436 231h1M1436 234h1M1436 236h1M1436 238h1M1436 243h1M1436 245h1M1436 248h1M1436 250h1M1436 255h1M1436 257h1M1436 259h1M1436 261h1M1436 266h1M1436 268h1M1436 271h1M1436 273h1M1436 278h1M1436 280h1M1436 282h1M1436 285h1M1436 290h1M1436 293h1M1436 295h1M1436 297h1M1436 302h1M1436 304h1M1436 307h1M1436 309h1M1436 314h1M1436 316h1M1436 318h1M1436 320h1M1436 325h1M1436 327h1M1436 330h1M1436 332h1M1436 337h1M1436 339h1M1436 341h1M1436 344h1M1436 348h1M1436 351h1M1436 353h1M1436 355h1M1436 360h1M1436 362h1M1436 365h1M1436 367h1M1436 372h1M1436 374h1M1436 376h1M1436 378h1M1436 383h1M1436 385h1M1436 388h1M1436 390h1M1436 395h1M1436 397h1M1436 399h1M1436 402h1M1436 407h1M1436 410h1M1436 412h1M1436 414h1M1436 419h1M1436 421h1M1436 424h1M1436 426h1M1436 431h1M1436 433h1M1436 435h1M1436 437h1M1436 442h1M1436 444h1M1436 447h1M1436 449h1M1436 454h1M1436 456h1M1436 458h1M1436 461h1M1436 465h1M1436 468h1M1436 470h1M1436 472h1M1436 477h1M1436 479h1M1436 482h1M1436 484h1M1436 489h1M1436 491h1M1436 493h1M1436 495h1M1436 500h1M1436 502h1M1436 505h1M1436 507h1M1436 512h1M1436 514h1M1436 516h1M1436 519h1M1436 524h1M1436 527h1M1436 529h1M1436 531h1M1436 536h1M1436 538h1M1436 541h1M1436 543h1M1436 548h1M1436 550h1M1436 552h1M1436 554h1M1436 559h1M1436 561h1M1436 564h1M1436 566h1M1436 571h1M1436 573h1M1436 575h1M1436 578h1M1436 582h1M1436 585h1M1436 587h1M1436 589h1M1436 594h1M1436 596h1M1436 599h1M1436 601h1M1436 606h1M1436 608h1M1436 610h1M1436 612h1M1436 617h1M1436 619h1M1436 622h1M1436 624h1M1436 629h1M1436 631h1M1436 633h1M1436 636h1M1436 641h1M1436 644h1M1436 646h1M1436 648h1M1436 653h1M1436 655h1M1436 658h1M1436 660h1M1436 665h1M1436 667h1M1436 669h1M1436 671h1M1436 676h1M1436 678h1M1436 681h1M1436 683h1M1436 688h1M1436 690h1M1436 692h1M1436 695h1M1436 699h1M1436 702h1M1436 704h1M1436 706h1M1436 711h1M1436 713h1M1436 716h1M1436 718h1M1436 723h1M1436 725h1M1436 727h1M1436 729h1M1436 734h1M1436 736h1M1436 739h1M1436 741h1M1436 746h1M1436 748h1M1436 750h1M1436 753h1M1436 758h1M1436 761h1M1436 763h1M1436 765h1M1436 770h1M1436 772h1M1436 775h1M1436 777h1M1436 782h1M1436 784h1M1436 786h1M1436 788h1M1436 793h1M1436 795h1M1436 798h1M1436 800h1M1436 805h1M1436 807h1M1436 809h1M1436 812h1M1436 816h1M1436 819h1M1436 821h1M1436 823h1M1436 828h1M1436 830h1M1436 833h1M1436 835h1M1436 840h1M1436 842h1M1436 844h1M1436 846h1M1436 851h1M1436 853h1M1436 856h1M1436 858h1M1436 863h1M1436 865h1M1436 867h1M1436 870h1M1436 875h1M1436 878h1M1436 880h1M1436 883h1M1436 887h1M1436 890h1M1436 892h1M1436 894h1M1436 899h1M1436 902h1M1436 904h1M1436 906h1M1436 911h1M1436 913h1M1436 916h1M1436 918h1M1436 923h1M1436 925h1M1436 928h1M1436 930h1M1436 935h1M1436 937h1M1436 940h1M1436 942h1M1436 947h1M1436 949h1M1436 952h1M1436 954h1M1436 959h1M1436 961h1M1436 963h1M1436 966h1M1436 971h1M1436 973h1M1436 975h1M1436 978h1M1436 982h1M1436 985h1M1436 987h1M1436 990h1M1611 56h1M1611 59h1M1611 61h1M1611 63h1M1611 68h1M1611 70h1M1611 73h1M1611 75h1M1611 80h1M1611 82h1M1611 84h1M1611 86h1M1611 91h1M1611 93h1M1611 96h1M1611 98h1M1611 103h1M1611 105h1M1611 107h1M1611 110h1M1611 114h1M1611 117h1M1611 119h1M1611 121h1M1611 126h1M1611 128h1M1611 131h1M1611 133h1M1611 138h1M1611 140h1M1611 142h1M1611 144h1M1611 149h1M1611 151h1M1611 154h1M1611 156h1M1611 161h1M1611 163h1M1611 165h1M1611 168h1M1611 173h1M1611 176h1M1611 178h1M1611 180h1M1611 185h1M1611 187h1M1611 190h1M1611 192h1M1611 197h1M1611 199h1M1611 201h1M1611 203h1M1611 208h1M1611 210h1M1611 213h1M1611 215h1M1611 220h1M1611 222h1M1611 224h1M1611 227h1M1611 231h1M1611 234h1M1611 236h1M1611 238h1M1611 243h1M1611 245h1M1611 248h1M1611 250h1M1611 255h1M1611 257h1M1611 259h1M1611 261h1M1611 266h1M1611 268h1M1611 271h1M1611 273h1M1611 278h1M1611 280h1M1611 282h1M1611 285h1M1611 290h1M1611 293h1M1611 295h1M1611 297h1M1611 302h1M1611 304h1M1611 307h1M1611 309h1M1611 314h1M1611 316h1M1611 318h1M1611 320h1M1611 325h1M1611 327h1M1611 330h1M1611 332h1M1611 337h1M1611 339h1M1611 341h1M1611 344h1M1611 348h1M1611 351h1M1611 353h1M1611 355h1M1611 360h1M1611 362h1M1611 365h1M1611 367h1M1611 372h1M1611 374h1M1611 376h1M1611 378h1M1611 383h1M1611 385h1M1611 388h1M1611 390h1M1611 395h1M1611 397h1M1611 399h1M1611 402h1M1611 407h1M1611 410h1M1611 412h1M1611 414h1M1611 419h1M1611 421h1M1611 424h1M1611 426h1M1611 431h1M1611 433h1M1611 435h1M1611 437h1M1611 442h1M1611 444h1M1611 447h1M1611 449h1M1611 454h1M1611 456h1M1611 458h1M1611 461h1M1611 465h1M1611 468h1M1611 470h1M1611 472h1M1611 477h1M1611 479h1M1611 482h1M1611 484h1M1611 489h1M1611 491h1M1611 493h1M1611 495h1M1611 500h1M1611 502h1M1611 505h1M1611 507h1M1611 512h1M1611 514h1M1611 516h1M1611 519h1M1611 524h1M1611 527h1M1611 529h1M1611 531h1M1611 536h1M1611 538h1M1611 541h1M1611 543h1M1611 548h1M1611 550h1M1611 552h1M1611 554h1M1611 559h1M1611 561h1M1611 564h1M1611 566h1M1611 571h1M1611 573h1M1611 575h1M1611 578h1M1611 582h1M1611 585h1M1611 587h1M1611 589h1M1611 594h1M1611 596h1M1611 599h1M1611 601h1M1611 606h1M1611 608h1M1611 610h1M1611 612h1M1611 617h1M1611 619h1M1611 622h1M1611 624h1M1611 629h1M1611 631h1M1611 633h1M1611 636h1M1611 641h1M1611 644h1M1611 646h1M1611 648h1M1611 653h1M1611 655h1M1611 658h1M1611 660h1M1611 665h1M1611 667h1M1611 669h1M1611 671h1M1611 676h1M1611 678h1M1611 681h1M1611 683h1M1611 688h1M1611 690h1M1611 692h1M1611 695h1M1611 699h1M1611 702h1M1611 704h1M1611 706h1M1611 711h1M1611 713h1M1611 716h1M1611 718h1M1611 723h1M1611 725h1M1611 727h1M1611 729h1M1611 734h1M1611 736h1M1611 739h1M1611 741h1M1611 746h1M1611 748h1M1611 750h1M1611 753h1M1611 758h1M1611 761h1M1611 763h1M1611 765h1M1611 770h1M1611 772h1M1611 775h1M1611 777h1M1611 782h1M1611 784h1M1611 786h1M1611 788h1M1611 793h1M1611 795h1M1611 798h1M1611 800h1M1611 805h1M1611 807h1M1611 809h1M1611 812h1M1611 816h1M1611 819h1M1611 821h1M1611 823h1M1611 828h1M1611 830h1M1611 833h1M1611 835h1M1611 840h1M1611 842h1M1611 844h1M1611 846h1M1611 851h1M1611 853h1M1611 856h1M1611 858h1M1611 863h1M1611 865h1M1611 867h1M1611 870h1M1611 875h1M1611 878h1M1611 880h1M1611 883h1M1611 887h1M1611 890h1M1611 892h1M1611 894h1M1611 899h1M1611 902h1M1611 904h1M1611 906h1M1611 911h1M1611 913h1M1611 916h1M1611 918h1M1611 923h1M1611 925h1M1611 928h1M1611 930h1M1611 935h1M1611 937h1M1611 940h1M1611 942h1M1611 947h1M1611 949h1M1611 952h1M1611 954h1M1611 959h1M1611 961h1M1611 963h1M1611 966h1M1611 971h1M1611 973h1M1611 975h1M1611 978h1M1611 982h1M1611 985h1M1611 987h1M1611 990h1" stroke="#c4c4c4" stroke-width="1" fill="none" transform="translate(0,0.5)"/>
<rect x="3" y="169" width="1748" height="2" fill="#717171"/>
<rect x="3" y="286" width="1748" height="2" fill="#717171"/>
<rect x="3" y="403" width="1748" height="2" fill="#717171"/>
<rect x="3" y="520" width="1748" height="2" fill="#717171"/>
<rect x="3" y="637" width="1748" height="2" fill="#717171"/>
<rect x="3" y="754" width="1748" height="2" fill="#717171"/>
<rect x="3" y="871" width="1748" height="2" fill="#717171"/>
<path d="M38.5 54V55M38.5 60V65M38.5 70V75M38.5 80V85M38.5 90V95M38.5 100V105M38.5 110V115M38.5 120V125M38.5 130V135M38.5 140V145M38.5 150V155M38.5 160V165M38.5 171V172M38.5 177V182M38.5 187V192M38.5 197V202M38.5 207V212M38.5 217V222M38.5 227V232M38.5 237V242M38.5 247V252M38.5 257V262M38.5 267V272M38.5 277V282M38.5 288V289M38.5 294V299M38.5 304V309M38.5 314V319M38.5 324V329M38.5 334V339M38.5 344V349M38.5 354V359M38.5 364V369M38.5 374V379M38.5 384V389M38.5 394V399M38.5 405V410M38.5 415V420M38.5 425V430M38.5 435V440M38.5 445V450M38.5 455V460M38.5 465V470M38.5 475V480M38.5 485V490M38.5 495V500M38.5 505V510M38.5 515V520M38.5 522V527M38.5 532V537M38.5 542V547M38.5 552V557M38.5 562V567M38.5 572V577M38.5 582V587M38.5 592V597M38.5 602V607M38.5 612V617M38.5 622V627M38.5 632V637M38.5 639V640M38.5 645V650M38.5 655V660M38.5 665V670M38.5 675V680M38.5 685V690M38.5 695V700M38.5 705V710M38.5 715V720M38.5 725V730M38.5 735V740M38.5 745V750M38.5 756V757M38.5 762V767M38.5 772V777M38.5 782V787M38.5 792V797M38.5 802V807M38.5 812V817M38.5 822V827M38.5 832V837M38.5 842V847M38.5 852V857M38.5 862V867M38.5 873V876M38.5 881V886M38.5 891V896M38.5 901V906M38.5 911V916M38.5 921V926M38.5 931V936M38.5 941V946M38.5 951V956M38.5 961V966M38.5 971V976M38.5 981V986M38.5 991V992" stroke="#d2d2d2" stroke-width="1" fill="none"/>
<path d="M46 112.5H1722" stroke="#cdcdcd" stroke-width="1" stroke-dasharray="5 5" fill="none"/>
<path d="M46 229.5H1722" stroke="#cdcdcd" stroke-width="1" stroke-dasharray="5 5" fill="none"/>
<path d="M6 407.5H1751" stroke="#cdcdcd" stroke-width="1" stroke-dasharray="5 5" fill="none"/>
<path d="M46 697.5H1722" stroke="#cdcdcd" stroke-width="1" stroke-dasharray="5 5" fill="none"/>
<path d="M46 933.5H1722" stroke="#cdcdcd" stroke-width="1" stroke-dasharray="5 5" fill="none"/>
</g></svg>
<div class="sc" style="top:82px;color:#f2e626"><span>8<i style="visibility:hidden;font-style:normal"> V</i></span></div>
<div class="sc" style="top:106px;color:#f2e626"><span>0 V</span></div>
<div class="sc" style="top:129px;color:#f2e626"><span>-8 V</span></div>
<div class="sc" style="top:152px;color:#f2e626"><span>-16 V</span></div>
<div class="sc" style="top:176px;color:#22cfdf"><span>200 mV</span></div>
<div class="sc" style="top:199px;color:#22cfdf"><span>100 mV</span></div>
<div class="sc" style="top:223px;color:#22cfdf"><span>0 V</span></div>
<div class="sc" style="top:246px;color:#22cfdf"><span>-100 mV</span></div>
<div class="sc" style="top:269px;color:#22cfdf"><span>-200 mV</span></div>
<div class="sc" style="top:293px;color:#e8405f"><span>400 mV</span></div>
<div class="sc" style="top:316px;color:#e8405f"><span>200 mV</span></div>
<div class="sc" style="top:340px;color:#e8405f"><span>0 V</span></div>
<div class="sc" style="top:363px;color:#e8405f"><span>-200 mV</span></div>
<div class="sc" style="top:386px;color:#e8405f"><span>-400 mV</span></div>
<div class="sc" style="top:412px;color:#8bd22c"><span>-50 mV</span></div>
<div class="sc" style="top:436px;color:#8bd22c"><span>-150 mV</span></div>
<div class="sc" style="top:459px;color:#8bd22c"><span>-250 mV</span></div>
<div class="sc" style="top:482px;color:#8bd22c"><span>-350 mV</span></div>
<div class="sc" style="top:505px;color:#8bd22c"><span>-450 mV</span></div>
<div class="sc" style="top:527px;color:#f7941e"><span>0 V</span></div>
<div class="sc" style="top:550px;color:#f7941e"><span>-100 mV</span></div>
<div class="sc" style="top:574px;color:#f7941e"><span>-200 mV</span></div>
<div class="sc" style="top:597px;color:#f7941e"><span>-300 mV</span></div>
<div class="sc" style="top:620px;color:#f7941e"><span>-400 mV</span></div>
<div class="sc" style="top:644px;color:#2828cc"><span>4 V</span></div>
<div class="sc" style="top:667px;color:#2828cc"><span>2 V</span></div>
<div class="sc" style="top:691px;color:#2828cc"><span>0 V</span></div>
<div class="sc" style="top:714px;color:#2828cc"><span>-2 V</span></div>
<div class="sc" style="top:737px;color:#2828cc"><span>-4 V</span></div>
<div class="sc" style="top:761px;color:#e855a8"><span>40 V</span></div>
<div class="sc" style="top:784px;color:#e855a8"><span>20 V</span></div>
<div class="sc" style="top:808px;color:#e855a8"><span>0 V</span></div>
<div class="sc" style="top:831px;color:#e855a8"><span>-20 V</span></div>
<div class="sc" style="top:854px;color:#e855a8"><span>-40 V</span></div>
<div class="sc" style="top:878px;color:#00dc96"><span>8 V</span></div>
<div class="sc" style="top:902px;color:#00dc96"><span>4 V</span></div>
<div class="sc" style="top:926px;color:#00dc96"><span>0 V</span></div>
<div class="sc" style="top:950px;color:#00dc96"><span>-4 V</span></div>
<div class="sc" style="top:974px;color:#00dc96"><span>-8 V</span></div>
<div class="tl" style="left:8.0px"><span>0 s</span></div>
<div class="tl" style="left:182.8px"><span>4 ms</span></div>
<div class="tl" style="left:357.6px"><span>8 ms</span></div>
<div class="tl" style="left:532.4px"><span>12 ms</span></div>
<div class="tl" style="left:707.2px"><span>16 ms</span></div>
<div class="tl" style="left:882.0px"><span>20 ms</span></div>
<div class="tl" style="left:1056.8px"><span>24 ms</span></div>
<div class="tl" style="left:1231.6px"><span>28 ms</span></div>
<div class="tl" style="left:1406.4px"><span>32 ms</span></div>
<div class="tl" style="left:1581.2px"><span>36 ms</span></div>
<svg width="1920" height="1080" viewBox="0 0 1920 1080">
<g clip-path="url(#cp)" shape-rendering="crispEdges">
<path d="M3 112.5H38M38.5 107V113M38 107.5H39M39.5 105V108M39 105.5H40M40.5 104V106M40 104.5H41M41.5 103V105M41 103.5H42M42.5 102V104M42 102.5H43M43.5 101V103M43 101.5H44M44.5 100V102M44 100.5H45M45.5 99V101M45 99.5H46M46.5 98V100M46 98.5H48M48.5 97V99M48 97.5H49M49.5 96V98M49 96.5H50M50.5 95V97M50 95.5H51M51.5 94V96M51 94.5H53M53.5 93V95M53 93.5H54M54.5 92V94M54 92.5H55M55.5 91V93M55 91.5H57M57.5 90V92M57 90.5H58M58.5 89V91M58 89.5H60M60.5 88V90M60 88.5H61M61.5 87V89M61 87.5H63M63.5 86V88M63 86.5H64M64.5 85V87M64 85.5H66M66.5 84V86M66 84.5H68M68.5 83V85M68 83.5H70M70.5 82V84M70 82.5H72M72.5 81V83M72 81.5H74M74.5 80V82M74 80.5H75M75.5 79V81M75 79.5H77M77.5 78V80M77 78.5H78M78.5 77V79M78 77.5H80M80.5 76V78M80 76.5H81M81.5 75V77M81 75.5H82M82.5 74V76M82 74.5H85M85.5 73V75M85 73.5H89M89.5 72V74M89 72.5H92M92.5 72V74M92 73.5H93M93.5 73V75M93 74.5H95M95.5 73V75M95 73.5H98M98.5 72V74M98 72.5H100M100.5 70V73M100 70.5H101M101.5 69V71M101 69.5H105M105.5 68V70M105 68.5H108M108.5 67V69M108 67.5H111M111.5 66V68M111 66.5H115M115.5 65V67M115 65.5H120M120.5 64V66M120 64.5H126M126.5 63V65M126 63.5H137M137.5 63V65M137 64.5H139M139.5 64V66M139 65.5H141M141.5 65V67M141 66.5H142M142.5 66V68M142 67.5H143M143.5 67V69M143 68.5H144M144.5 68V70M144 69.5H145M145.5 69V71M145 70.5H146M146.5 70V72M146 71.5H147M147.5 71V73M147 72.5H148M148.5 72V74M148 73.5H149M149.5 73V75M149 74.5H150M150.5 74V76M150 75.5H151M151.5 75V77M151 76.5H153M153.5 76V78M153 77.5H154M154.5 77V79M154 78.5H156M156.5 78V80M156 79.5H166M166.5 78V80M166 78.5H172M172.5 77V79M172 77.5H180M180.5 76V78M180 76.5H194M194.5 75V77M194 75.5H203M203.5 74V76M203 74.5H210M210.5 73V75M210 73.5H217M217.5 73V75M217 74.5H218M218.5 74V76M218 75.5H220M220.5 75V77M220 76.5H221M221.5 76V78M221 77.5H225M225.5 76V78M225 76.5H241M241.5 75V77M241 75.5H257M257.5 74V76M257 74.5H261M261.5 73V75M261 73.5H263M263.5 72V74M263 72.5H264M264.5 71V73M264 71.5H266M266.5 70V72M266 70.5H279M279.5 69V71M279 69.5H280M280.5 69V71M280 70.5H282M282.5 69V71M282 69.5H293M293.5 68V70M293 68.5H310M310.5 67V69M310 67.5H336M336.5 66V68M336 66.5H348M348.5 65V67M348 65.5H361M361.5 64V66M361 64.5H371M371.5 63V65M371 63.5H384M384.5 62V64M384 62.5H394M394.5 61V63M394 61.5H407M407.5 60V62M407 60.5H419M419.5 59V61M419 59.5H420M420.5 59V61M420 60.5H421M421.5 59V61M421 59.5H429M429.5 58V60M429 58.5H432M432.5 58V60M432 59.5H434M434.5 59V61M434 60.5H436M436.5 59V61M436 59.5H441M441.5 58V60M441 58.5H447M447.5 58V60M447 59.5H449M449.5 58V60M449 58.5H455M455.5 58V60M455 59.5H474M474.5 59V61M474 60.5H487M487.5 60V62M487 61.5H496M496.5 61V63M496 62.5H497M497.5 62V64M497 63.5H498M498.5 63V65M498 64.5H500M500.5 64V66M500 65.5H504M504.5 65V67M504 66.5H508M508.5 66V68M508 67.5H511M511.5 67V69M511 68.5H512M512.5 68V70M512 69.5H514M514.5 69V71M514 70.5H515M515.5 70V72M515 71.5H516M516.5 71V73M516 72.5H518M518.5 72V74M518 73.5H519M519.5 73V75M519 74.5H520M520.5 74V76M520 75.5H521M521.5 75V77M521 76.5H522M522.5 76V78M522 77.5H523M523.5 77V79M523 78.5H525M525.5 78V80M525 79.5H526M526.5 79V81M526 80.5H527M527.5 80V82M527 81.5H529M529.5 81V83M529 82.5H532M532.5 82V84M532 83.5H533M533.5 83V85M533 84.5H534M534.5 84V86M534 85.5H535M535.5 85V87M535 86.5H537M537.5 86V88M537 87.5H538M538.5 87V89M538 88.5H540M540.5 88V90M540 89.5H541M541.5 89V91M541 90.5H543M543.5 90V92M543 91.5H544M544.5 91V93M544 92.5H546M546.5 92V94M546 93.5H549M549.5 93V95M549 94.5H552M552.5 94V96M552 95.5H555M555.5 95V97M555 96.5H560M560.5 96V98M560 97.5H562M562.5 97V99M562 98.5H563M563.5 97V99M563 97.5H564M564.5 97V99M564 98.5H573M573.5 98V100M573 99.5H585M585.5 99V101M585 100.5H602M602.5 100V102M602 101.5H665M665.5 101V103M665 102.5H670M670.5 101V103M670 101.5H671M671.5 101V103M671 102.5H673M673.5 101V103M673 101.5H674M674.5 101V103M674 102.5H718M718.5 102V104M718 103.5H724M724.5 102V104M724 102.5H725M725.5 102V104M725 103.5H727M727.5 102V104M727 102.5H730M730.5 102V104M730 103.5H786M786.5 103V105M786 104.5H787M787.5 103V105M787 103.5H789M789.5 103V105M789 104.5H855M855.5 104V106M855 105.5H860M860.5 104V106M860 104.5H862M862.5 104V106M862 105.5H909M909.5 105V107M909 106.5H910M910.5 105V107M910 105.5H918M918.5 105V107M918 106.5H919M919.5 105V107M919 105.5H922M922.5 105V107M922 106.5H935M935.5 105V107M935 105.5H936M936.5 105V107M936 106.5H983M983.5 106V108M983 107.5H986M986.5 106V108M986 106.5H1000M1000.5 106V108M1000 107.5H1124M1124.5 107V109M1124 108.5H1275M1275.5 108V110M1275 109.5H1276M1276.5 108V110M1276 108.5H1288M1288.5 108V110M1288 109.5H1290M1290.5 108V110M1290 108.5H1294M1294.5 108V110M1294 109.5H1296M1296.5 108V110M1296 108.5H1297M1297.5 108V110M1297 109.5H1302M1302.5 108V110M1302 108.5H1305M1305.5 108V110M1305 109.5H1309M1309.5 108V110M1309 108.5H1314M1314.5 108V110M1314 109.5H1320M1320.5 108V110M1320 108.5H1328M1328.5 108V110M1328 109.5H1339M1339.5 108V110M1339 108.5H1340M1340.5 108V110M1340 109.5H1470M1470.5 109V111M1470 110.5H1476M1476.5 109V111M1476 109.5H1500M1500.5 109V111M1500 110.5H1508M1508.5 109V111M1508 109.5H1510M1510.5 109V111M1510 110.5H1515M1515.5 109V111M1515 109.5H1519M1519.5 109V111M1519 110.5H1529M1529.5 109V111M1529 109.5H1530M1530.5 109V111M1530 110.5H1539M1539.5 109V111M1539 109.5H1542M1542.5 109V111M1542 110.5H1545M1545.5 109V111M1545 109.5H1548M1548.5 109V111M1548 110.5H1751" stroke="#f7ec14" stroke-width="1" fill="none"/>
<rect x="3" y="228" width="1748" height="1" fill="#1fd2e2"/>
<rect x="3" y="346" width="1748" height="1" fill="#ee3c5f"/>
<path d="M46 346.5H1722" stroke="#cdcdcd" stroke-width="1" stroke-dasharray="5 5" fill="none"/>
<rect x="3" y="408" width="1748" height="1" fill="#86d22d"/>
<path d="M13 407.5h1M15 407.5h1M18 407.5h1M24 407.5h1M26 407.5h1M29 407.5h1M46 407.5h1M53 407.5h1M59 407.5h1M63 407.5h1M70 407.5h1M98 407.5h1M99 407.5h1M123 407.5h1M133 407.5h1M141 407.5h1M144 407.5h1M156 407.5h1M157 407.5h1M161 407.5h1M167 407.5h1M187 407.5h1M197 407.5h1M199 407.5h1M208 407.5h1M245 407.5h1M246 407.5h1M248 407.5h1M253 407.5h1M256 407.5h1M260 407.5h1M271 407.5h1M284 407.5h1M313 407.5h1M318 407.5h1M320 407.5h1M334 407.5h1M356 407.5h1M364 407.5h1M382 407.5h1M422 407.5h1M429 407.5h1M440 407.5h1M442 407.5h1M452 407.5h1M453 407.5h1M462 407.5h1M472 407.5h1M496 407.5h1M499 407.5h1M516 407.5h1M521 407.5h1M524 407.5h1M534 407.5h1M537 407.5h1M544 407.5h1M556 407.5h1M558 407.5h1M564 407.5h1M567 407.5h1M584 407.5h1M615 407.5h1M616 407.5h1M622 407.5h1M623 407.5h1M633 407.5h1M651 407.5h1M653 407.5h1M654 407.5h1M660 407.5h1M663 407.5h1M701 407.5h1M708 407.5h1M711 407.5h1M712 407.5h1M715 407.5h1M757 407.5h1M763 407.5h1M767 407.5h1M791 407.5h1M801 407.5h1M819 407.5h1M823 407.5h1M826 407.5h1M836 407.5h1M845 407.5h1M857 407.5h1M863 407.5h1M884 407.5h1M886 407.5h1M893 407.5h1M898 407.5h1M908 407.5h1M915 407.5h1M941 407.5h1M970 407.5h1M971 407.5h1M982 407.5h1M994 407.5h1M1018 407.5h1M1026 407.5h1M1031 407.5h1M1038 407.5h1M1049 407.5h1M1054 407.5h1M1058 407.5h1M1064 407.5h1M1065 407.5h1M1087 407.5h1M1098 407.5h1M1117 407.5h1M1122 407.5h1M1127 407.5h1M1136 407.5h1M1168 407.5h1M1175 407.5h1M1181 407.5h1M1189 407.5h1M1195 407.5h1M1203 407.5h1M1208 407.5h1M1215 407.5h1M1222 407.5h1M1223 407.5h1M1237 407.5h1M1240 407.5h1M1266 407.5h1M1270 407.5h1M1284 407.5h1M1287 407.5h1M1292 407.5h1M1295 407.5h1M1298 407.5h1M1318 407.5h1M1319 407.5h1M1334 407.5h1M1337 407.5h1M1348 407.5h1M1356 407.5h1M1359 407.5h1M1361 407.5h1M1367 407.5h1M1390 407.5h1M1401 407.5h1M1435 407.5h1M1436 407.5h1M1446 407.5h1M1470 407.5h1M1481 407.5h1M1484 407.5h1M1490 407.5h1M1514 407.5h1M1523 407.5h1M1524 407.5h1M1527 407.5h1M1537 407.5h1M1549 407.5h1M1552 407.5h1M1557 407.5h1M1560 407.5h1M1576 407.5h1M1589 407.5h1M1601 407.5h1M1648 407.5h1M1674 407.5h1M1685 407.5h1M1699 407.5h1M1709 407.5h1M1718 407.5h1" stroke="#86d22d" stroke-width="1" fill="none"/>
<path d="M51 697.5h1M53 697.5h1M55 697.5h1M74 697.5h1M81 697.5h1M84 697.5h1M92 697.5h1M94 697.5h1M101 697.5h1M103 697.5h1M113 697.5h1M115 697.5h1M125 697.5h1M133 697.5h1M143 697.5h1M164 697.5h1M173 697.5h1M175 697.5h1M182 697.5h1M185 697.5h1M191 697.5h1M195 697.5h1M204 697.5h1M211 697.5h1M215 697.5h1M224 697.5h1M231 697.5h1M233 697.5h1M235 697.5h1M241 697.5h1M243 697.5h1M245 697.5h1M252 697.5h1M253 697.5h1M263 697.5h1M265 697.5h1M283 697.5h1M284 697.5h1M293 697.5h1M295 697.5h1M301 697.5h1M302 697.5h1M311 697.5h1M313 697.5h1M314 697.5h1M315 697.5h1M322 697.5h1M341 697.5h1M343 697.5h1M355 697.5h1M362 697.5h1M371 697.5h1M372 697.5h1M374 697.5h1M381 697.5h1M384 697.5h1M392 697.5h1M403 697.5h1M411 697.5h1M415 697.5h1M421 697.5h1M422 697.5h1M423 697.5h1M433 697.5h1M435 697.5h1M443 697.5h1M444 697.5h1M453 697.5h1M455 697.5h1M465 697.5h1M474 697.5h1M485 697.5h1M502 697.5h1M503 697.5h1M505 697.5h1M511 697.5h1M515 697.5h1M521 697.5h1M522 697.5h1M531 697.5h1M535 697.5h1M543 697.5h1M562 697.5h1M564 697.5h1M571 697.5h1M572 697.5h1M573 697.5h1M574 697.5h1M594 697.5h1M601 697.5h1M602 697.5h1M605 697.5h1M611 697.5h1M632 697.5h1M634 697.5h1M635 697.5h1M642 697.5h1M651 697.5h1M652 697.5h1M661 697.5h1M663 697.5h1M664 697.5h1M672 697.5h1M691 697.5h1M694 697.5h1M695 697.5h1M701 697.5h1M703 697.5h1M704 697.5h1M705 697.5h1M711 697.5h1M713 697.5h1M714 697.5h1M715 697.5h1M723 697.5h1M743 697.5h1M744 697.5h1M753 697.5h1M765 697.5h1M771 697.5h1M773 697.5h1M781 697.5h1M783 697.5h1M785 697.5h1M792 697.5h1M794 697.5h1M801 697.5h1M802 697.5h1M814 697.5h1M821 697.5h1M825 697.5h1M834 697.5h1M844 697.5h1M845 697.5h1M851 697.5h1M864 697.5h1M881 697.5h1M884 697.5h1M885 697.5h1M893 697.5h1M894 697.5h1M911 697.5h1M912 697.5h1M922 697.5h1M923 697.5h1M924 697.5h1M931 697.5h1M934 697.5h1M942 697.5h1M944 697.5h1M945 697.5h1M951 697.5h1M954 697.5h1M955 697.5h1M962 697.5h1M964 697.5h1M971 697.5h1M972 697.5h1M973 697.5h1M974 697.5h1M984 697.5h1M991 697.5h1M992 697.5h1M1005 697.5h1M1013 697.5h1M1021 697.5h1M1031 697.5h1M1034 697.5h1M1041 697.5h1M1042 697.5h1M1051 697.5h1M1053 697.5h1M1061 697.5h1M1062 697.5h1M1074 697.5h1M1075 697.5h1M1082 697.5h1M1083 697.5h1M1084 697.5h1M1085 697.5h1M1091 697.5h1M1092 697.5h1M1093 697.5h1M1105 697.5h1M1111 697.5h1M1112 697.5h1M1113 697.5h1M1122 697.5h1M1123 697.5h1M1125 697.5h1M1142 697.5h1M1145 697.5h1M1153 697.5h1M1154 697.5h1M1155 697.5h1M1162 697.5h1M1163 697.5h1M1164 697.5h1M1174 697.5h1M1175 697.5h1M1181 697.5h1M1182 697.5h1M1183 697.5h1M1193 697.5h1M1205 697.5h1M1212 697.5h1M1221 697.5h1M1224 697.5h1M1225 697.5h1M1232 697.5h1M1234 697.5h1M1241 697.5h1M1242 697.5h1M1244 697.5h1M1255 697.5h1M1262 697.5h1M1271 697.5h1M1281 697.5h1M1283 697.5h1M1285 697.5h1M1293 697.5h1M1311 697.5h1M1314 697.5h1M1315 697.5h1M1321 697.5h1M1341 697.5h1M1343 697.5h1M1344 697.5h1M1351 697.5h1M1353 697.5h1M1364 697.5h1M1371 697.5h1M1374 697.5h1M1375 697.5h1M1385 697.5h1M1392 697.5h1M1413 697.5h1M1414 697.5h1M1421 697.5h1M1431 697.5h1M1432 697.5h1M1433 697.5h1M1442 697.5h1M1445 697.5h1M1455 697.5h1M1461 697.5h1M1464 697.5h1M1474 697.5h1M1475 697.5h1M1482 697.5h1M1483 697.5h1M1484 697.5h1M1485 697.5h1M1502 697.5h1M1505 697.5h1M1523 697.5h1M1532 697.5h1M1534 697.5h1M1535 697.5h1M1542 697.5h1M1545 697.5h1M1561 697.5h1M1565 697.5h1M1571 697.5h1M1572 697.5h1M1575 697.5h1M1593 697.5h1M1595 697.5h1M1601 697.5h1M1603 697.5h1M1604 697.5h1M1612 697.5h1M1622 697.5h1M1624 697.5h1M1625 697.5h1M1631 697.5h1M1642 697.5h1M1654 697.5h1M1662 697.5h1M1685 697.5h1M1702 697.5h1M1711 697.5h1M1713 697.5h1M1721 697.5h1" stroke="#2323c0" stroke-width="1" fill="none"/>
<rect x="3" y="534" width="1748" height="1" fill="#f7921e"/>
<path d="M6 534.5H1722" stroke="#cdcdcd" stroke-width="1" stroke-dasharray="5 5" fill="none"/>
<rect x="3" y="696" width="1748" height="1" fill="#2323c0"/>
<rect x="3" y="814" width="1748" height="1" fill="#e650a5"/>
<path d="M46 814.5H1722" stroke="#cdcdcd" stroke-width="1" stroke-dasharray="5 5" fill="none"/>
<path d="M3 931.5H37.5V897.5H1751" stroke="#00d890" stroke-width="1" fill="none"/>
</g>
<g clip-path="url(#cp)">
<path d="M28 54H49L38.5 65Z" fill="#f7921e"/>
<path d="M1710 61H1742.5Q1744.5 61 1744.5 63V95.5Z" fill="#4d4d4d"/>
<circle cx="1737.2" cy="67.6" r="4" fill="none" stroke="#a4a4a4" stroke-width="1.4"/>
<path d="M1733.8 71.2L1728.2 76.4" stroke="#a4a4a4" stroke-width="2.6" stroke-linecap="round"/>
<path d="M3 112.5H7" stroke="#f7ec14" stroke-width="1" shape-rendering="crispEdges"/>
<path d="M8.5 99.6H29.2Q30.3 99.6 31.1 100.39999999999999L40.8 111.1Q41.6 112 40.8 112.9L31.1 123.60000000000001Q30.3 124.4 29.2 124.4H8.5Q6.5 124.4 6.5 122.4V101.6Q6.5 99.6 8.5 99.6Z" fill="#19180a" stroke="#f2e626" stroke-width="1.3"/>
<path d="M3 229.5H7" stroke="#1fd2e2" stroke-width="1" shape-rendering="crispEdges"/>
<path d="M8.5 216.6H29.2Q30.3 216.6 31.1 217.4L40.8 228.1Q41.6 229 40.8 229.9L31.1 240.6Q30.3 241.4 29.2 241.4H8.5Q6.5 241.4 6.5 239.4V218.6Q6.5 216.6 8.5 216.6Z" fill="#061416" stroke="#22cfdf" stroke-width="1.3"/>
<path d="M3 346.5H7" stroke="#ee3c5f" stroke-width="1" shape-rendering="crispEdges"/>
<path d="M8.5 333.6H29.2Q30.3 333.6 31.1 334.40000000000003L40.8 345.1Q41.6 346 40.8 346.9L31.1 357.59999999999997Q30.3 358.4 29.2 358.4H8.5Q6.5 358.4 6.5 356.4V335.6Q6.5 333.6 8.5 333.6Z" fill="#1a0a0d" stroke="#e8405f" stroke-width="1.3"/>
<path d="M8.5 450.6H29.2Q30.3 450.6 31.1 451.40000000000003L40.8 462.1Q41.6 463 40.8 463.9L31.1 474.59999999999997Q30.3 475.4 29.2 475.4H8.5Q6.5 475.4 6.5 473.4V452.6Q6.5 450.6 8.5 450.6Z" fill="#11170a" stroke="#8bd22c" stroke-width="1.3"/>
<path d="M8.5 567.6H29.2Q30.3 567.6 31.1 568.4L40.8 579.1Q41.6 580 40.8 580.9L31.1 591.6Q30.3 592.4 29.2 592.4H8.5Q6.5 592.4 6.5 590.4V569.6Q6.5 567.6 8.5 567.6Z" fill="#1b1208" stroke="#f7941e" stroke-width="1.3"/>
<path d="M3 697.5H7" stroke="#2323c0" stroke-width="1" shape-rendering="crispEdges"/>
<path d="M8.5 684.6H29.2Q30.3 684.6 31.1 685.4L40.8 696.1Q41.6 697 40.8 697.9L31.1 708.6Q30.3 709.4 29.2 709.4H8.5Q6.5 709.4 6.5 707.4V686.6Q6.5 684.6 8.5 684.6Z" fill="#07071a" stroke="#2828cc" stroke-width="1.3"/>
<path d="M3 814.5H7" stroke="#e650a5" stroke-width="1" shape-rendering="crispEdges"/>
<path d="M8.5 801.6H29.2Q30.3 801.6 31.1 802.4L40.8 813.1Q41.6 814 40.8 814.9L31.1 825.6Q30.3 826.4 29.2 826.4H8.5Q6.5 826.4 6.5 824.4V803.6Q6.5 801.6 8.5 801.6Z" fill="#e855a8" stroke="#e855a8" stroke-width="1.3"/>
<path d="M3 932.5H7" stroke="#00d890" stroke-width="1" shape-rendering="crispEdges"/>
<path d="M8.5 919.6H29.2Q30.3 919.6 31.1 920.4L40.8 931.1Q41.6 932 40.8 932.9L31.1 943.6Q30.3 944.4 29.2 944.4H8.5Q6.5 944.4 6.5 942.4V921.6Q6.5 919.6 8.5 919.6Z" fill="#04150f" stroke="#00dc96" stroke-width="1.3"/>
<path d="M29 874H47V893H42L38.5 899.5L35 893H29Z" fill="#000" stroke="#f7921e" stroke-width="2" stroke-linejoin="miter"/>
<path d="M1730 908.5L1742 898V906.8H1751V910.4H1742V919Z" fill="#00dc96"/>
</g>
<g>
<rect x="586" y="41" width="582" height="2" fill="#bdbdbd"/>
<path d="M592.5 33.5H586.5V49.5H592.5M1161.5 33.5H1167.5V49.5H1161.5" stroke="#f2f2f2" stroke-width="1" fill="none" shape-rendering="crispEdges"/>
<path d="M590 30H605.5L597.7 35.2Z" fill="#f7921e"/>
<path d="M591.5 38H603.5V49.5H600.5L597.5 53.8L594.5 49.5H591.5Z" fill="#000" stroke="#f7921e" stroke-width="1.6"/>
</g>
<circle cx="1761.9" cy="501.7" r="2.1" fill="#c8c8c8"/>
<circle cx="1761.9" cy="510.3" r="2.1" fill="#c8c8c8"/>
<circle cx="1761.9" cy="519" r="2.1" fill="#c8c8c8"/>
</svg>
<div class="abs" style="left:29px;top:875px;width:19px;text-align:center;font-size:16px;line-height:16px;font-weight:bold;color:#f7921e">T</div>
<div class="abs" style="left:591px;top:38.5px;width:13px;text-align:center;font-size:10px;line-height:11px;font-weight:bold;color:#f7921e">T</div>
<div class="bdg" style="left:10px;top:103.7px;color:#f2e626">C 1</div>
<div class="nm" id="nm1" style="left:53px;top:100.7px;color:#f2e626;letter-spacing:1.2px">U_loop-b</div>
<div class="bdg" style="left:10px;top:220.7px;color:#22cfdf">C 2</div>
<div class="nm" id="nm2" style="left:53px;top:217.7px;color:#22cfdf;letter-spacing:0.49px">YAP-a</div>
<div class="bdg" style="left:10px;top:337.7px;color:#e8405f">C 3</div>
<div class="nm" id="nm3" style="left:53px;top:334.7px;color:#e8405f;letter-spacing:0.1px">CeBr-a</div>
<div class="bdg" style="left:10px;top:454.7px;color:#8bd22c">C 4</div>
<div class="nm" id="nm4" style="left:53px;top:451.7px;color:#8bd22c;letter-spacing:0.31px">CebR-b</div>
<div class="bdg" style="left:10px;top:571.7px;color:#f7941e">C 5</div>
<div class="nm" id="nm5" style="left:53px;top:568.7px;color:#f7941e;letter-spacing:0.56px">NaITl-a</div>
<div class="bdg" style="left:10px;top:688.7px;color:#2828cc">C 6</div>
<div class="nm" id="nm6" style="left:53px;top:685.7px;color:#2828cc;letter-spacing:-0.83px">LYSO</div>
<div class="bdg" style="left:10px;top:805.7px;color:#000">C 7</div>
<div class="nm" id="nm7" style="left:53px;top:802.7px;color:#e855a8;letter-spacing:1.16px">null</div>
<div class="bdg" style="left:10px;top:923.7px;color:#00dc96">C 8</div>
<div class="nm" id="nm8" style="left:53px;top:921.5px;color:#00dc96;letter-spacing:1.14px">Trigger</div>
<div id="rp">
<div class="abs" style="left:0;top:0px;width:149px;text-align:center;font-size:15px;line-height:18px;font-weight:bold;color:#f2f2f2">Add New...</div>
<div class="btn" style="left:7px;top:26px;line-height:34px;">Cursors</div>
<div class="btn" style="left:79px;top:26px;line-height:34px;">Note</div>
<div class="btn" style="left:7px;top:72px;line-height:34px;">Measure</div>
<div class="btn" style="left:79px;top:72px;line-height:34px;">Search</div>
<div class="btn" style="left:7px;top:118px;line-height:15.5px;"><span style="margin-top:1px">Results<br>Table</span></div>
<div class="btn" style="left:79px;top:118px;line-height:34px;">Plot</div>
<div class="abs" style="left:3px;top:163px;width:144px;height:1px;background:#6a615c"></div>
<div class="abs" style="left:3px;top:916px;width:144px;height:1px;background:#6a615c"></div>
<div class="btn" style="left:6px;top:925px;"></div>
<svg width="149" height="967" viewBox="1770 27 149 967" style="left:0;top:0">
<g fill="#bdbdbd"><rect x="1795" y="958" width="2" height="2"/><rect x="1799.5" y="958" width="2" height="2" opacity=".55"/><rect x="1804" y="958" width="2" height="2" opacity=".55"/><rect x="1808.5" y="958" width="2" height="2"/>
<rect x="1795" y="962.5" width="2" height="2" opacity=".45"/><rect x="1808.5" y="962.5" width="2" height="2" opacity=".9"/><rect x="1795" y="967" width="2" height="2" opacity=".45"/>
<rect x="1795" y="971.5" width="2" height="2"/><rect x="1799.5" y="972" width="1.6" height="1.6"/></g>
<circle cx="1809.3" cy="972" r="5.3" fill="#8a8a8a" stroke="#c8c8c8" stroke-width="1.5"/>
<path d="M1813.5 976.2L1819.2 981.8" stroke="#c8c8c8" stroke-width="3" stroke-linecap="round"/>
<path d="M1814 976.7L1818.8 981.4" stroke="#3a3a3a" stroke-width="0.9" stroke-linecap="round"/>
<g fill="none" stroke="#cdcdcd" stroke-width="1.5">
<ellipse cx="1882.5" cy="959.5" rx="13" ry="4.2"/>
<path d="M1869.5 959.5V962.5C1869.5 964.8 1875 966.8 1882.5 966.8S1895.500 964.8 1895.500 962.5V959.5"/>
<path d="M1871 965L1873 982.5C1873.400 985 1878 986.3 1882.5 986.3S1891.600 985 1892 982.5L1894 965"/>
<path d="M1876.500 968V982M1882.500 968.500V983M1888.500 968V982" stroke-width="1"/>
<path d="M1878.500 957.2Q1882.500 955.6 1886.500 957.2" stroke-width="1"/>
</g>
</svg>
</div>
<div class="cb" style="left:3px"><div class="h" style="background:#4d4a22"><span style="color:#f2e626">Ch 1</span></div><div class="sh"></div><div class="r" style="top:22.5px">4 V/div</div><div class="r" style="top:43px">1 MΩ</div><div class="r" style="top:61px">200 kHz</div><div class="bw">B<sub>W</sub></div></div>
<div class="cb" style="left:98px"><div class="h" style="background:#204244"><span style="color:#22cfdf">Ch 2</span></div><div class="sh"></div><div class="r" style="top:22.5px">50 mV/div</div><div class="r" style="top:43px">50 Ω</div><div class="r" style="top:61px">200 kHz</div><div class="bw">B<sub>W</sub></div></div>
<div class="cb" style="left:193px"><div class="h" style="background:#48252b"><span style="color:#e8405f">Ch 3</span></div><div class="sh"></div><div class="r" style="top:22.5px">100 mV/div</div><div class="r" style="top:43px">50 Ω</div><div class="r" style="top:61px">200 kHz</div><div class="bw">B<sub>W</sub></div></div>
<div class="cb" style="left:288px"><div class="h" style="background:#384722"><span style="color:#8bd22c">Ch 4</span></div><div class="sh"></div><div class="r" style="top:22.5px">50 mV/div</div><div class="r" style="top:43px">50 Ω</div><div class="r" style="top:61px">200 kHz</div><div class="bw">B<sub>W</sub></div></div>
<div class="cb" style="left:383px"><div class="h" style="background:#4a3524"><span style="color:#f7941e">Ch 5</span></div><div class="sh"></div><div class="r" style="top:22.5px">50 mV/div</div><div class="r" style="top:43px">50 Ω</div><div class="r" style="top:61px">200 kHz</div><div class="bw">B<sub>W</sub></div></div>
<div class="cb" style="left:478px"><div class="h" style="background:#222142"><span style="color:#2828cc">Ch 6</span></div><div class="sh"></div><div class="r" style="top:22.5px">1 V/div</div><div class="r" style="top:43px">50 Ω</div><div class="r" style="top:61px">200 kHz</div><div class="bw">B<sub>W</sub></div></div>
<div class="cb" style="left:573px"><div class="h" style="background:#e855a8"><span style="color:#000">Ch 7</span></div><div class="sh"></div><div class="r" style="top:22.5px">10 V/div</div><div class="r" style="top:43px">1 MΩ</div><div class="r" style="top:61px">200 kHz</div><div class="bw">B<sub>W</sub></div></div>
<div class="cb" style="left:668px"><div class="h" style="background:#1c4438"><span style="color:#00dc96">Ch 8</span></div><div class="sh"></div><div class="r" style="top:22.5px">2 V/div</div><div class="r" style="top:43px">1 MΩ</div><div class="r" style="top:61px">200 kHz</div><div class="bw">B<sub>W</sub></div></div>
<div class="abs" style="left:1119px;top:998px;width:1px;height:79px;background:#6a635e"></div>
<div class="abs" style="left:1270px;top:998px;width:1px;height:79px;background:#6a635e"></div>
<div class="an" style="left:1130px"><i style="background:#f7941e"></i><div>Add<br>New<br>Math</div></div>
<div class="an" style="left:1175px"><i style="background:#c4c4d4"></i><div>Add<br>New<br>Ref</div></div>
<div class="an" style="left:1220px"><i style="background:#c455f0"></i><div>Add<br>New<br>Bus</div></div>
<div class="pn" style="left:1281px;width:200px"><div class="h"><span>Horizontal</span></div><div class="sh"></div><div class="r" style="left:7px;top:22.5px">4 ms/div</div><div class="r" style="left:113px;top:22.5px">40 ms</div><div class="r" style="left:7px;top:41.5px;letter-spacing:-0.5px">SR: 1 MS/s</div><div class="r" style="left:113px;top:41.5px">1 µs/pt</div><div class="r" style="left:7px;top:60.5px">RL: 40 kpts</div><div class="r" style="left:127px;top:60.5px">2%</div><svg width="12" height="14" viewBox="0 0 12 14" style="left:112px;top:62px"><path d="M1 1H9.500V8.500H7.200L5.200 11.800L3.300 8.500H1Z" fill="#000" stroke="#f7921e" stroke-width="1.2"/><path d="M3 3.200H7.500M5.250 3.200V7.300" stroke="#fff" stroke-width="1.300" fill="none"/></svg></div>
<div class="pn" style="left:1491px;width:160px"><div class="h"><span>Trigger</span></div><div class="sh"></div><div class="abs" style="left:7px;top:24px;width:28px;height:15px;border:1px solid #000;border-radius:5px;background:#00dc9a;text-align:center;font-size:14.5px;line-height:15px;color:#000">8</div><svg width="20" height="14" viewBox="0 0 20 14" style="left:46px;top:25px"><path d="M1.500 11.500H5.500L11.500 2.500H17" stroke="#2c2c6e" stroke-width="1.100" fill="none"/></svg><div class="r" style="left:73px;top:22.5px">4 V</div></div>
<div class="pn" style="left:1661px;width:150px"><div class="h"><span>Acquisition</span></div><div class="sh"></div><div class="r" style="left:7px;top:22.5px;letter-spacing:0.5px">Manual,</div><div class="r" style="left:85px;top:22.5px;letter-spacing:0.3px">Analyze</div><div class="r" style="left:7px;top:41.5px">High Res: 16 bits</div><div class="r" style="left:7px;top:60.5px">Single: 1 /1</div></div>
<div class="abs" style="left:1821px;top:998px;width:88px;height:34px;border:1px solid #5a5a5a;border-radius:6px;background:#fb1e26;color:#fff;font-weight:bold;font-size:13px;line-height:32px;text-align:center">Stopped</div>
<div class="abs" style="left:1821px;top:1042px;width:90px;height:36px;border-radius:5px;background:#c9c9c9;color:#000;font-size:15px;line-height:17px;text-align:center"><div style="margin-top:1px">10 Nov 2025<br>10:35:06</div></div>
</body></html>
